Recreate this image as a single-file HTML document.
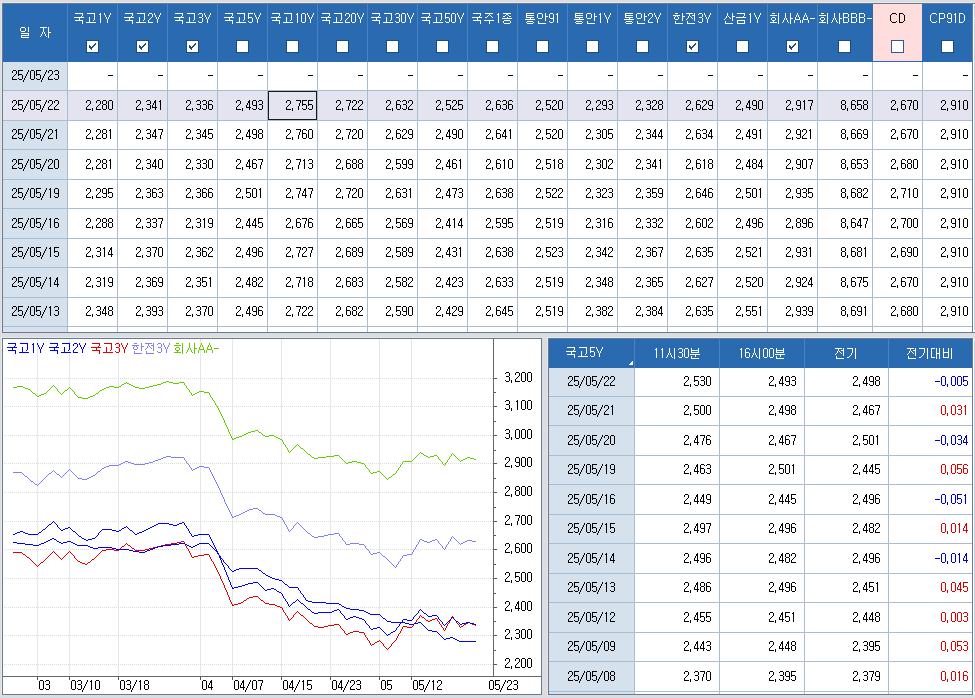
<!DOCTYPE html>
<html><head><meta charset="utf-8"><style>
html,body{margin:0;padding:0;}
body{width:975px;height:698px;overflow:hidden;position:relative;background:#dcdde1;font-family:"Liberation Sans", sans-serif;}
</style></head><body>
<div style="position:absolute;left:1px;top:2px;width:974px;height:331px;background:#e7e8ea;"></div><div style="position:absolute;left:2px;top:3px;width:973px;height:330px;background:#687a90;"></div><div style="position:absolute;left:3px;top:4px;width:969px;height:328px;background:#ffffff;"></div><div style="position:absolute;left:3px;top:4px;width:969px;height:58px;background:#2a6ab0;"></div><div style="position:absolute;left:873px;top:4px;width:49px;height:57px;background:#ffdddd;"></div><div style="position:absolute;left:3px;top:62px;width:64px;height:270px;background:#d5e1ec;"></div><div style="position:absolute;left:3px;top:91px;width:969px;height:29px;background:#e4e4f0;"></div><div style="position:absolute;left:3px;top:90px;width:969px;height:1px;background:#a9bdd0;"></div><div style="position:absolute;left:3px;top:120px;width:969px;height:1px;background:#a9bdd0;"></div><div style="position:absolute;left:3px;top:149px;width:969px;height:1px;background:#a9bdd0;"></div><div style="position:absolute;left:3px;top:179px;width:969px;height:1px;background:#a9bdd0;"></div><div style="position:absolute;left:3px;top:208px;width:969px;height:1px;background:#a9bdd0;"></div><div style="position:absolute;left:3px;top:238px;width:969px;height:1px;background:#a9bdd0;"></div><div style="position:absolute;left:3px;top:267px;width:969px;height:1px;background:#a9bdd0;"></div><div style="position:absolute;left:3px;top:297px;width:969px;height:1px;background:#a9bdd0;"></div><div style="position:absolute;left:3px;top:326px;width:969px;height:1px;background:#a9bdd0;"></div><div style="position:absolute;left:67px;top:62px;width:1px;height:270px;background:#a9bdd0;"></div><div style="position:absolute;left:117px;top:62px;width:1px;height:270px;background:#a9bdd0;"></div><div style="position:absolute;left:167px;top:62px;width:1px;height:270px;background:#a9bdd0;"></div><div style="position:absolute;left:217px;top:62px;width:1px;height:270px;background:#a9bdd0;"></div><div style="position:absolute;left:267px;top:62px;width:1px;height:270px;background:#a9bdd0;"></div><div style="position:absolute;left:317px;top:62px;width:1px;height:270px;background:#a9bdd0;"></div><div style="position:absolute;left:367px;top:62px;width:1px;height:270px;background:#a9bdd0;"></div><div style="position:absolute;left:417px;top:62px;width:1px;height:270px;background:#a9bdd0;"></div><div style="position:absolute;left:467px;top:62px;width:1px;height:270px;background:#a9bdd0;"></div><div style="position:absolute;left:517px;top:62px;width:1px;height:270px;background:#a9bdd0;"></div><div style="position:absolute;left:567px;top:62px;width:1px;height:270px;background:#a9bdd0;"></div><div style="position:absolute;left:617px;top:62px;width:1px;height:270px;background:#a9bdd0;"></div><div style="position:absolute;left:667px;top:62px;width:1px;height:270px;background:#a9bdd0;"></div><div style="position:absolute;left:717px;top:62px;width:1px;height:270px;background:#a9bdd0;"></div><div style="position:absolute;left:767px;top:62px;width:1px;height:270px;background:#a9bdd0;"></div><div style="position:absolute;left:817px;top:62px;width:1px;height:270px;background:#a9bdd0;"></div><div style="position:absolute;left:872px;top:62px;width:1px;height:270px;background:#a9bdd0;"></div><div style="position:absolute;left:922px;top:62px;width:1px;height:270px;background:#a9bdd0;"></div><div style="position:absolute;left:67px;top:4px;width:1px;height:58px;background:#4b82c0;"></div><div style="position:absolute;left:117px;top:4px;width:1px;height:58px;background:#4b82c0;"></div><div style="position:absolute;left:167px;top:4px;width:1px;height:58px;background:#4b82c0;"></div><div style="position:absolute;left:217px;top:4px;width:1px;height:58px;background:#4b82c0;"></div><div style="position:absolute;left:267px;top:4px;width:1px;height:58px;background:#4b82c0;"></div><div style="position:absolute;left:317px;top:4px;width:1px;height:58px;background:#4b82c0;"></div><div style="position:absolute;left:367px;top:4px;width:1px;height:58px;background:#4b82c0;"></div><div style="position:absolute;left:417px;top:4px;width:1px;height:58px;background:#4b82c0;"></div><div style="position:absolute;left:467px;top:4px;width:1px;height:58px;background:#4b82c0;"></div><div style="position:absolute;left:517px;top:4px;width:1px;height:58px;background:#4b82c0;"></div><div style="position:absolute;left:567px;top:4px;width:1px;height:58px;background:#4b82c0;"></div><div style="position:absolute;left:617px;top:4px;width:1px;height:58px;background:#4b82c0;"></div><div style="position:absolute;left:667px;top:4px;width:1px;height:58px;background:#4b82c0;"></div><div style="position:absolute;left:717px;top:4px;width:1px;height:58px;background:#4b82c0;"></div><div style="position:absolute;left:767px;top:4px;width:1px;height:58px;background:#4b82c0;"></div><div style="position:absolute;left:817px;top:4px;width:1px;height:58px;background:#4b82c0;"></div><div style="position:absolute;left:972px;top:3px;width:1px;height:330px;background:#687a90;"></div><div style="position:absolute;left:973px;top:4px;width:2px;height:328px;background:#ffffff;"></div><div style="position:absolute;left:974px;top:5px;width:1px;height:325px;background:#c6d2de;"></div><div style="position:absolute;left:973px;top:18px;width:2px;height:1px;background:#ffffff;"></div><div style="position:absolute;left:86px;top:40px;width:11px;height:11px;background:#fff;border:1px solid #1b4a7f;"></div><svg style="position:absolute;left:87px;top:41px" width="11" height="11" shape-rendering="crispEdges"><path d="M8 2h1v1h-1zM7 3h1v1h-1zM8 3h1v1h-1zM2 4h1v1h-1zM6 4h1v1h-1zM7 4h1v1h-1zM2 5h1v1h-1zM3 5h1v1h-1zM5 5h1v1h-1zM6 5h1v1h-1zM2 6h1v1h-1zM3 6h1v1h-1zM4 6h1v1h-1zM5 6h1v1h-1zM3 7h1v1h-1zM4 7h1v1h-1zM4 8h1v1h-1z" fill="#1b4a7f"/></svg><div style="position:absolute;left:136px;top:40px;width:11px;height:11px;background:#fff;border:1px solid #1b4a7f;"></div><svg style="position:absolute;left:137px;top:41px" width="11" height="11" shape-rendering="crispEdges"><path d="M8 2h1v1h-1zM7 3h1v1h-1zM8 3h1v1h-1zM2 4h1v1h-1zM6 4h1v1h-1zM7 4h1v1h-1zM2 5h1v1h-1zM3 5h1v1h-1zM5 5h1v1h-1zM6 5h1v1h-1zM2 6h1v1h-1zM3 6h1v1h-1zM4 6h1v1h-1zM5 6h1v1h-1zM3 7h1v1h-1zM4 7h1v1h-1zM4 8h1v1h-1z" fill="#1b4a7f"/></svg><div style="position:absolute;left:186px;top:40px;width:11px;height:11px;background:#fff;border:1px solid #1b4a7f;"></div><svg style="position:absolute;left:187px;top:41px" width="11" height="11" shape-rendering="crispEdges"><path d="M8 2h1v1h-1zM7 3h1v1h-1zM8 3h1v1h-1zM2 4h1v1h-1zM6 4h1v1h-1zM7 4h1v1h-1zM2 5h1v1h-1zM3 5h1v1h-1zM5 5h1v1h-1zM6 5h1v1h-1zM2 6h1v1h-1zM3 6h1v1h-1zM4 6h1v1h-1zM5 6h1v1h-1zM3 7h1v1h-1zM4 7h1v1h-1zM4 8h1v1h-1z" fill="#1b4a7f"/></svg><div style="position:absolute;left:236px;top:40px;width:11px;height:11px;background:#fff;border:1px solid #1b4a7f;"></div><div style="position:absolute;left:286px;top:40px;width:11px;height:11px;background:#fff;border:1px solid #1b4a7f;"></div><div style="position:absolute;left:336px;top:40px;width:11px;height:11px;background:#fff;border:1px solid #1b4a7f;"></div><div style="position:absolute;left:386px;top:40px;width:11px;height:11px;background:#fff;border:1px solid #1b4a7f;"></div><div style="position:absolute;left:436px;top:40px;width:11px;height:11px;background:#fff;border:1px solid #1b4a7f;"></div><div style="position:absolute;left:486px;top:40px;width:11px;height:11px;background:#fff;border:1px solid #1b4a7f;"></div><div style="position:absolute;left:536px;top:40px;width:11px;height:11px;background:#fff;border:1px solid #1b4a7f;"></div><div style="position:absolute;left:586px;top:40px;width:11px;height:11px;background:#fff;border:1px solid #1b4a7f;"></div><div style="position:absolute;left:636px;top:40px;width:11px;height:11px;background:#fff;border:1px solid #1b4a7f;"></div><div style="position:absolute;left:686px;top:40px;width:11px;height:11px;background:#fff;border:1px solid #1b4a7f;"></div><svg style="position:absolute;left:687px;top:41px" width="11" height="11" shape-rendering="crispEdges"><path d="M8 2h1v1h-1zM7 3h1v1h-1zM8 3h1v1h-1zM2 4h1v1h-1zM6 4h1v1h-1zM7 4h1v1h-1zM2 5h1v1h-1zM3 5h1v1h-1zM5 5h1v1h-1zM6 5h1v1h-1zM2 6h1v1h-1zM3 6h1v1h-1zM4 6h1v1h-1zM5 6h1v1h-1zM3 7h1v1h-1zM4 7h1v1h-1zM4 8h1v1h-1z" fill="#1b4a7f"/></svg><div style="position:absolute;left:736px;top:40px;width:11px;height:11px;background:#fff;border:1px solid #1b4a7f;"></div><div style="position:absolute;left:786px;top:40px;width:11px;height:11px;background:#fff;border:1px solid #1b4a7f;"></div><svg style="position:absolute;left:787px;top:41px" width="11" height="11" shape-rendering="crispEdges"><path d="M8 2h1v1h-1zM7 3h1v1h-1zM8 3h1v1h-1zM2 4h1v1h-1zM6 4h1v1h-1zM7 4h1v1h-1zM2 5h1v1h-1zM3 5h1v1h-1zM5 5h1v1h-1zM6 5h1v1h-1zM2 6h1v1h-1zM3 6h1v1h-1zM4 6h1v1h-1zM5 6h1v1h-1zM3 7h1v1h-1zM4 7h1v1h-1zM4 8h1v1h-1z" fill="#1b4a7f"/></svg><div style="position:absolute;left:838px;top:40px;width:11px;height:11px;background:#fff;border:1px solid #1b4a7f;"></div><div style="position:absolute;left:891px;top:40px;width:11px;height:11px;background:#fff;border:1px solid #2a5a90;"></div><div style="position:absolute;left:941px;top:40px;width:11px;height:11px;background:#fff;border:1px solid #1b4a7f;"></div><div style="position:absolute;left:108px;top:75px;width:5px;height:1px;background:#000;"></div><div style="position:absolute;left:158px;top:75px;width:5px;height:1px;background:#000;"></div><div style="position:absolute;left:208px;top:75px;width:5px;height:1px;background:#000;"></div><div style="position:absolute;left:258px;top:75px;width:5px;height:1px;background:#000;"></div><div style="position:absolute;left:308px;top:75px;width:5px;height:1px;background:#000;"></div><div style="position:absolute;left:358px;top:75px;width:5px;height:1px;background:#000;"></div><div style="position:absolute;left:408px;top:75px;width:5px;height:1px;background:#000;"></div><div style="position:absolute;left:458px;top:75px;width:5px;height:1px;background:#000;"></div><div style="position:absolute;left:508px;top:75px;width:5px;height:1px;background:#000;"></div><div style="position:absolute;left:558px;top:75px;width:5px;height:1px;background:#000;"></div><div style="position:absolute;left:608px;top:75px;width:5px;height:1px;background:#000;"></div><div style="position:absolute;left:658px;top:75px;width:5px;height:1px;background:#000;"></div><div style="position:absolute;left:708px;top:75px;width:5px;height:1px;background:#000;"></div><div style="position:absolute;left:758px;top:75px;width:5px;height:1px;background:#000;"></div><div style="position:absolute;left:808px;top:75px;width:5px;height:1px;background:#000;"></div><div style="position:absolute;left:863px;top:75px;width:5px;height:1px;background:#000;"></div><div style="position:absolute;left:913px;top:75px;width:5px;height:1px;background:#000;"></div><div style="position:absolute;left:963px;top:75px;width:5px;height:1px;background:#000;"></div><div style="position:absolute;left:268px;top:91px;width:47px;height:27px;border:1px solid #1a1a1a;"></div><div style="position:absolute;left:547px;top:337px;width:428px;height:358px;background:#e7e8ea;"></div><div style="position:absolute;left:548px;top:338px;width:425px;height:357px;background:#687a90;"></div><div style="position:absolute;left:549px;top:339px;width:423px;height:355px;background:#ffffff;"></div><div style="position:absolute;left:549px;top:339px;width:423px;height:29px;background:#2a6ab0;"></div><div style="position:absolute;left:549px;top:368px;width:85px;height:326px;background:#d5e1ec;"></div><div style="position:absolute;left:549px;top:396px;width:423px;height:1px;background:#a9bdd0;"></div><div style="position:absolute;left:549px;top:425px;width:423px;height:1px;background:#a9bdd0;"></div><div style="position:absolute;left:549px;top:455px;width:423px;height:1px;background:#a9bdd0;"></div><div style="position:absolute;left:549px;top:484px;width:423px;height:1px;background:#a9bdd0;"></div><div style="position:absolute;left:549px;top:514px;width:423px;height:1px;background:#a9bdd0;"></div><div style="position:absolute;left:549px;top:543px;width:423px;height:1px;background:#a9bdd0;"></div><div style="position:absolute;left:549px;top:573px;width:423px;height:1px;background:#a9bdd0;"></div><div style="position:absolute;left:549px;top:602px;width:423px;height:1px;background:#a9bdd0;"></div><div style="position:absolute;left:549px;top:632px;width:423px;height:1px;background:#a9bdd0;"></div><div style="position:absolute;left:549px;top:661px;width:423px;height:1px;background:#a9bdd0;"></div><div style="position:absolute;left:549px;top:691px;width:423px;height:1px;background:#a9bdd0;"></div><div style="position:absolute;left:634px;top:368px;width:1px;height:326px;background:#a9bdd0;"></div><div style="position:absolute;left:634px;top:339px;width:1px;height:29px;background:#4b82c0;"></div><div style="position:absolute;left:719px;top:368px;width:1px;height:326px;background:#a9bdd0;"></div><div style="position:absolute;left:719px;top:339px;width:1px;height:29px;background:#4b82c0;"></div><div style="position:absolute;left:804px;top:368px;width:1px;height:326px;background:#a9bdd0;"></div><div style="position:absolute;left:804px;top:339px;width:1px;height:29px;background:#4b82c0;"></div><div style="position:absolute;left:888px;top:368px;width:1px;height:326px;background:#a9bdd0;"></div><div style="position:absolute;left:888px;top:339px;width:1px;height:29px;background:#4b82c0;"></div><div style="position:absolute;left:972px;top:338px;width:1px;height:357px;background:#687a90;"></div><div style="position:absolute;left:973px;top:339px;width:2px;height:355px;background:#ffffff;"></div><div style="position:absolute;left:974px;top:340px;width:1px;height:352px;background:#c6d2de;"></div><div style="position:absolute;left:632px;top:361px;width:1px;height:1px;background:#fff;"></div><div style="position:absolute;left:631px;top:362px;width:2px;height:1px;background:#fff;"></div><div style="position:absolute;left:630px;top:363px;width:3px;height:1px;background:#fff;"></div><div style="position:absolute;left:629px;top:364px;width:4px;height:1px;background:#fff;"></div><div style="position:absolute;left:1px;top:337px;width:541px;height:358px;background:#e7e8ea;"></div><div style="position:absolute;left:2px;top:338px;width:540px;height:357px;background:#687a90;"></div><div style="position:absolute;left:3px;top:339px;width:538px;height:355px;background:#ffffff;"></div><svg style="position:absolute;left:0;top:0" width="975" height="698"><rect x="37" y="339" width="1" height="337" fill="#e6e6e6"/><rect x="37" y="677" width="1" height="3" fill="#555"/><rect x="69" y="339" width="1" height="337" fill="#e6e6e6"/><rect x="69" y="677" width="1" height="3" fill="#555"/><rect x="118" y="339" width="1" height="337" fill="#e6e6e6"/><rect x="118" y="677" width="1" height="3" fill="#555"/><rect x="200" y="339" width="1" height="337" fill="#e6e6e6"/><rect x="200" y="677" width="1" height="3" fill="#555"/><rect x="232" y="339" width="1" height="337" fill="#e6e6e6"/><rect x="232" y="677" width="1" height="3" fill="#555"/><rect x="281" y="339" width="1" height="337" fill="#e6e6e6"/><rect x="281" y="677" width="1" height="3" fill="#555"/><rect x="330" y="339" width="1" height="337" fill="#e6e6e6"/><rect x="330" y="677" width="1" height="3" fill="#555"/><rect x="379" y="339" width="1" height="337" fill="#e6e6e6"/><rect x="379" y="677" width="1" height="3" fill="#555"/><rect x="411" y="339" width="1" height="337" fill="#e6e6e6"/><rect x="411" y="677" width="1" height="3" fill="#555"/><line x1="3" y1="378.5" x2="493" y2="378.5" stroke="#dcdcdc" stroke-width="1" stroke-dasharray="1,1" stroke-dashoffset="1"/><rect x="494" y="378" width="3" height="1" fill="#555"/><rect x="494" y="392" width="2" height="1" fill="#555"/><line x1="3" y1="406.5" x2="493" y2="406.5" stroke="#dcdcdc" stroke-width="1" stroke-dasharray="1,1" stroke-dashoffset="1"/><rect x="494" y="406" width="3" height="1" fill="#555"/><rect x="494" y="421" width="2" height="1" fill="#555"/><line x1="3" y1="435.5" x2="493" y2="435.5" stroke="#dcdcdc" stroke-width="1" stroke-dasharray="1,1" stroke-dashoffset="1"/><rect x="494" y="435" width="3" height="1" fill="#555"/><rect x="494" y="450" width="2" height="1" fill="#555"/><line x1="3" y1="463.5" x2="493" y2="463.5" stroke="#dcdcdc" stroke-width="1" stroke-dasharray="1,1" stroke-dashoffset="1"/><rect x="494" y="463" width="3" height="1" fill="#555"/><rect x="494" y="478" width="2" height="1" fill="#555"/><line x1="3" y1="492.5" x2="493" y2="492.5" stroke="#dcdcdc" stroke-width="1" stroke-dasharray="1,1" stroke-dashoffset="1"/><rect x="494" y="492" width="3" height="1" fill="#555"/><rect x="494" y="507" width="2" height="1" fill="#555"/><line x1="3" y1="521.5" x2="493" y2="521.5" stroke="#dcdcdc" stroke-width="1" stroke-dasharray="1,1" stroke-dashoffset="1"/><rect x="494" y="521" width="3" height="1" fill="#555"/><rect x="494" y="535" width="2" height="1" fill="#555"/><line x1="3" y1="549.5" x2="493" y2="549.5" stroke="#dcdcdc" stroke-width="1" stroke-dasharray="1,1" stroke-dashoffset="1"/><rect x="494" y="549" width="3" height="1" fill="#555"/><rect x="494" y="564" width="2" height="1" fill="#555"/><line x1="3" y1="578.5" x2="493" y2="578.5" stroke="#dcdcdc" stroke-width="1" stroke-dasharray="1,1" stroke-dashoffset="1"/><rect x="494" y="578" width="3" height="1" fill="#555"/><rect x="494" y="593" width="2" height="1" fill="#555"/><line x1="3" y1="607.5" x2="493" y2="607.5" stroke="#dcdcdc" stroke-width="1" stroke-dasharray="1,1" stroke-dashoffset="1"/><rect x="494" y="607" width="3" height="1" fill="#555"/><rect x="494" y="621" width="2" height="1" fill="#555"/><line x1="3" y1="635.5" x2="493" y2="635.5" stroke="#dcdcdc" stroke-width="1" stroke-dasharray="1,1" stroke-dashoffset="1"/><rect x="494" y="635" width="3" height="1" fill="#555"/><rect x="494" y="650" width="2" height="1" fill="#555"/><line x1="3" y1="664.5" x2="493" y2="664.5" stroke="#dcdcdc" stroke-width="1" stroke-dasharray="1,1" stroke-dashoffset="1"/><rect x="494" y="664" width="3" height="1" fill="#555"/><rect x="493" y="339" width="1" height="338" fill="#666"/><rect x="3" y="676" width="538" height="1" fill="#666"/><path d="M166 381h3v1h-3zM126 382h1v1h-1zM163 382h3v1h-3zM169 382h4v1h-4zM179 382h5v1h-5zM124 383h2v1h-2zM127 383h2v1h-2zM161 383h2v1h-2zM173 383h6v1h-6zM184 383h1v1h-1zM122 384h2v1h-2zM129 384h2v1h-2zM157 384h4v1h-4zM184 384h1v1h-1zM53 385h1v1h-1zM121 385h1v1h-1zM131 385h2v1h-2zM153 385h4v1h-4zM185 385h1v1h-1zM17 386h6v1h-6zM52 386h1v1h-1zM54 386h1v1h-1zM109 386h5v1h-5zM119 386h2v1h-2zM133 386h2v1h-2zM149 386h4v1h-4zM186 386h1v1h-1zM13 387h4v1h-4zM23 387h2v1h-2zM51 387h1v1h-1zM55 387h1v1h-1zM69 387h1v1h-1zM106 387h3v1h-3zM114 387h5v1h-5zM135 387h4v1h-4zM145 387h4v1h-4zM186 387h1v1h-1zM25 388h3v1h-3zM50 388h1v1h-1zM56 388h1v1h-1zM68 388h1v1h-1zM70 388h1v1h-1zM104 388h2v1h-2zM139 388h6v1h-6zM187 388h1v1h-1zM28 389h2v1h-2zM49 389h1v1h-1zM57 389h1v1h-1zM67 389h1v1h-1zM71 389h1v1h-1zM102 389h2v1h-2zM188 389h1v1h-1zM30 390h1v1h-1zM48 390h1v1h-1zM57 390h1v1h-1zM65 390h2v1h-2zM72 390h1v1h-1zM100 390h2v1h-2zM189 390h1v1h-1zM31 391h1v1h-1zM47 391h1v1h-1zM58 391h1v1h-1zM64 391h1v1h-1zM73 391h1v1h-1zM99 391h1v1h-1zM189 391h1v1h-1zM199 391h5v1h-5zM32 392h1v1h-1zM46 392h1v1h-1zM59 392h1v1h-1zM63 392h1v1h-1zM74 392h1v1h-1zM98 392h1v1h-1zM190 392h1v1h-1zM197 392h2v1h-2zM204 392h5v1h-5zM33 393h2v1h-2zM44 393h2v1h-2zM60 393h1v1h-1zM62 393h1v1h-1zM74 393h1v1h-1zM96 393h2v1h-2zM191 393h1v1h-1zM195 393h2v1h-2zM209 393h1v1h-1zM35 394h1v1h-1zM41 394h3v1h-3zM61 394h1v1h-1zM75 394h1v1h-1zM95 394h1v1h-1zM191 394h1v1h-1zM193 394h2v1h-2zM209 394h1v1h-1zM36 395h1v1h-1zM39 395h2v1h-2zM76 395h1v1h-1zM93 395h2v1h-2zM192 395h1v1h-1zM210 395h1v1h-1zM37 396h2v1h-2zM77 396h1v1h-1zM90 396h3v1h-3zM210 396h1v1h-1zM78 397h4v1h-4zM88 397h2v1h-2zM211 397h1v1h-1zM82 398h6v1h-6zM212 398h1v1h-1zM212 399h1v1h-1zM213 400h1v1h-1zM214 401h1v1h-1zM214 402h1v1h-1zM215 403h1v1h-1zM215 404h1v1h-1zM216 405h1v1h-1zM217 406h1v1h-1zM217 407h1v1h-1zM218 408h1v1h-1zM218 409h1v1h-1zM219 410h1v1h-1zM219 411h1v1h-1zM220 412h1v1h-1zM220 413h1v1h-1zM221 414h1v1h-1zM221 415h1v1h-1zM222 416h1v1h-1zM222 417h1v1h-1zM223 418h1v1h-1zM223 419h1v1h-1zM224 420h1v1h-1zM224 421h1v1h-1zM224 422h1v1h-1zM225 423h1v1h-1zM225 424h1v1h-1zM226 425h1v1h-1zM226 426h1v1h-1zM227 427h1v1h-1zM227 428h1v1h-1zM228 429h1v1h-1zM228 430h1v1h-1zM255 430h3v1h-3zM228 431h1v1h-1zM251 431h4v1h-4zM258 431h1v1h-1zM229 432h1v1h-1zM248 432h3v1h-3zM259 432h2v1h-2zM229 433h1v1h-1zM246 433h2v1h-2zM261 433h1v1h-1zM230 434h1v1h-1zM244 434h2v1h-2zM262 434h1v1h-1zM230 435h1v1h-1zM242 435h2v1h-2zM263 435h2v1h-2zM269 435h5v1h-5zM231 436h1v1h-1zM239 436h3v1h-3zM265 436h4v1h-4zM274 436h2v1h-2zM231 437h1v1h-1zM236 437h3v1h-3zM276 437h2v1h-2zM232 438h1v1h-1zM234 438h2v1h-2zM278 438h2v1h-2zM232 439h2v1h-2zM280 439h2v1h-2zM282 440h1v1h-1zM282 441h1v1h-1zM283 442h1v1h-1zM283 443h1v1h-1zM284 444h1v1h-1zM297 444h1v1h-1zM285 445h1v1h-1zM296 445h1v1h-1zM298 445h1v1h-1zM285 446h1v1h-1zM295 446h1v1h-1zM299 446h1v1h-1zM286 447h1v1h-1zM294 447h1v1h-1zM300 447h1v1h-1zM287 448h1v1h-1zM293 448h1v1h-1zM301 448h2v1h-2zM287 449h1v1h-1zM292 449h1v1h-1zM303 449h1v1h-1zM288 450h1v1h-1zM291 450h1v1h-1zM304 450h1v1h-1zM288 451h1v1h-1zM290 451h1v1h-1zM305 451h1v1h-1zM289 452h1v1h-1zM306 452h1v1h-1zM420 452h1v1h-1zM307 453h1v1h-1zM419 453h1v1h-1zM421 453h2v1h-2zM452 453h1v1h-1zM308 454h2v1h-2zM418 454h1v1h-1zM423 454h1v1h-1zM451 454h1v1h-1zM453 454h1v1h-1zM310 455h1v1h-1zM334 455h5v1h-5zM417 455h1v1h-1zM424 455h2v1h-2zM434 455h3v1h-3zM451 455h1v1h-1zM454 455h1v1h-1zM311 456h1v1h-1zM326 456h8v1h-8zM339 456h1v1h-1zM416 456h1v1h-1zM426 456h2v1h-2zM430 456h4v1h-4zM437 456h1v1h-1zM450 456h1v1h-1zM455 456h1v1h-1zM312 457h2v1h-2zM318 457h8v1h-8zM340 457h1v1h-1zM415 457h1v1h-1zM428 457h2v1h-2zM438 457h1v1h-1zM449 457h1v1h-1zM456 457h1v1h-1zM467 457h3v1h-3zM314 458h4v1h-4zM341 458h1v1h-1zM414 458h1v1h-1zM438 458h1v1h-1zM449 458h1v1h-1zM457 458h1v1h-1zM465 458h2v1h-2zM470 458h4v1h-4zM342 459h1v1h-1zM413 459h1v1h-1zM439 459h1v1h-1zM448 459h1v1h-1zM458 459h1v1h-1zM463 459h2v1h-2zM474 459h2v1h-2zM343 460h1v1h-1zM412 460h1v1h-1zM440 460h1v1h-1zM447 460h1v1h-1zM459 460h1v1h-1zM461 460h2v1h-2zM344 461h1v1h-1zM352 461h5v1h-5zM403 461h9v1h-9zM441 461h1v1h-1zM447 461h1v1h-1zM460 461h1v1h-1zM345 462h1v1h-1zM348 462h4v1h-4zM357 462h4v1h-4zM402 462h1v1h-1zM442 462h1v1h-1zM446 462h1v1h-1zM346 463h2v1h-2zM361 463h3v1h-3zM402 463h1v1h-1zM442 463h1v1h-1zM445 463h1v1h-1zM364 464h1v1h-1zM401 464h1v1h-1zM443 464h1v1h-1zM445 464h1v1h-1zM365 465h1v1h-1zM400 465h1v1h-1zM444 465h1v1h-1zM365 466h1v1h-1zM400 466h1v1h-1zM366 467h1v1h-1zM399 467h1v1h-1zM367 468h1v1h-1zM398 468h1v1h-1zM368 469h1v1h-1zM398 469h1v1h-1zM369 470h1v1h-1zM397 470h1v1h-1zM369 471h1v1h-1zM377 471h3v1h-3zM396 471h1v1h-1zM370 472h1v1h-1zM373 472h4v1h-4zM380 472h1v1h-1zM396 472h1v1h-1zM371 473h2v1h-2zM381 473h1v1h-1zM395 473h1v1h-1zM382 474h1v1h-1zM393 474h2v1h-2zM383 475h1v1h-1zM392 475h1v1h-1zM384 476h1v1h-1zM391 476h1v1h-1zM385 477h1v1h-1zM389 477h2v1h-2zM386 478h1v1h-1zM388 478h1v1h-1zM387 479h1v1h-1z" fill="#66cc00" shape-rendering="crispEdges"/><path d="M166 456h5v1h-5zM163 457h3v1h-3zM171 457h13v1h-13zM161 458h2v1h-2zM184 458h1v1h-1zM158 459h3v1h-3zM184 459h1v1h-1zM155 460h3v1h-3zM185 460h1v1h-1zM125 461h3v1h-3zM153 461h2v1h-2zM186 461h1v1h-1zM123 462h2v1h-2zM128 462h3v1h-3zM149 462h4v1h-4zM186 462h1v1h-1zM121 463h2v1h-2zM131 463h3v1h-3zM145 463h4v1h-4zM187 463h1v1h-1zM119 464h2v1h-2zM134 464h11v1h-11zM188 464h1v1h-1zM109 465h10v1h-10zM189 465h1v1h-1zM106 466h3v1h-3zM189 466h1v1h-1zM199 466h5v1h-5zM104 467h2v1h-2zM190 467h1v1h-1zM197 467h2v1h-2zM204 467h5v1h-5zM102 468h2v1h-2zM191 468h1v1h-1zM195 468h2v1h-2zM209 468h1v1h-1zM69 469h1v1h-1zM101 469h1v1h-1zM191 469h1v1h-1zM193 469h2v1h-2zM209 469h1v1h-1zM53 470h1v1h-1zM68 470h1v1h-1zM70 470h1v1h-1zM100 470h1v1h-1zM192 470h1v1h-1zM210 470h1v1h-1zM52 471h1v1h-1zM54 471h1v1h-1zM67 471h1v1h-1zM71 471h1v1h-1zM98 471h2v1h-2zM210 471h1v1h-1zM13 472h9v1h-9zM51 472h1v1h-1zM55 472h1v1h-1zM66 472h1v1h-1zM72 472h1v1h-1zM97 472h1v1h-1zM211 472h1v1h-1zM22 473h1v1h-1zM49 473h2v1h-2zM56 473h1v1h-1zM65 473h1v1h-1zM73 473h1v1h-1zM96 473h1v1h-1zM211 473h1v1h-1zM23 474h1v1h-1zM48 474h1v1h-1zM57 474h2v1h-2zM64 474h1v1h-1zM74 474h1v1h-1zM95 474h1v1h-1zM212 474h1v1h-1zM24 475h1v1h-1zM47 475h1v1h-1zM59 475h1v1h-1zM63 475h1v1h-1zM75 475h1v1h-1zM93 475h2v1h-2zM212 475h1v1h-1zM25 476h2v1h-2zM46 476h1v1h-1zM60 476h1v1h-1zM62 476h1v1h-1zM76 476h1v1h-1zM91 476h2v1h-2zM213 476h1v1h-1zM27 477h1v1h-1zM45 477h1v1h-1zM61 477h1v1h-1zM77 477h1v1h-1zM89 477h2v1h-2zM213 477h1v1h-1zM28 478h1v1h-1zM44 478h1v1h-1zM78 478h4v1h-4zM87 478h2v1h-2zM214 478h1v1h-1zM29 479h1v1h-1zM43 479h1v1h-1zM82 479h5v1h-5zM214 479h1v1h-1zM30 480h1v1h-1zM42 480h1v1h-1zM215 480h1v1h-1zM31 481h2v1h-2zM41 481h1v1h-1zM215 481h1v1h-1zM33 482h1v1h-1zM40 482h1v1h-1zM216 482h1v1h-1zM34 483h1v1h-1zM39 483h1v1h-1zM216 483h1v1h-1zM35 484h2v1h-2zM38 484h1v1h-1zM217 484h1v1h-1zM37 485h1v1h-1zM217 485h1v1h-1zM218 486h1v1h-1zM218 487h1v1h-1zM219 488h1v1h-1zM219 489h1v1h-1zM220 490h1v1h-1zM220 491h1v1h-1zM220 492h1v1h-1zM221 493h1v1h-1zM221 494h1v1h-1zM222 495h1v1h-1zM222 496h1v1h-1zM223 497h1v1h-1zM223 498h1v1h-1zM224 499h1v1h-1zM224 500h1v1h-1zM224 501h1v1h-1zM225 502h1v1h-1zM225 503h1v1h-1zM226 504h1v1h-1zM226 505h1v1h-1zM227 506h1v1h-1zM227 507h1v1h-1zM228 508h1v1h-1zM253 508h5v1h-5zM228 509h1v1h-1zM249 509h4v1h-4zM258 509h1v1h-1zM229 510h1v1h-1zM247 510h2v1h-2zM259 510h2v1h-2zM229 511h1v1h-1zM245 511h2v1h-2zM261 511h1v1h-1zM230 512h1v1h-1zM243 512h2v1h-2zM262 512h1v1h-1zM230 513h1v1h-1zM241 513h2v1h-2zM263 513h2v1h-2zM231 514h1v1h-1zM239 514h2v1h-2zM265 514h10v1h-10zM231 515h1v1h-1zM236 515h3v1h-3zM275 515h2v1h-2zM232 516h1v1h-1zM234 516h2v1h-2zM277 516h3v1h-3zM232 517h2v1h-2zM280 517h2v1h-2zM282 518h1v1h-1zM282 519h1v1h-1zM283 520h1v1h-1zM283 521h1v1h-1zM284 522h1v1h-1zM297 522h1v1h-1zM284 523h1v1h-1zM296 523h1v1h-1zM298 523h1v1h-1zM285 524h1v1h-1zM295 524h1v1h-1zM299 524h1v1h-1zM286 525h1v1h-1zM294 525h1v1h-1zM300 525h1v1h-1zM286 526h1v1h-1zM293 526h1v1h-1zM301 526h1v1h-1zM287 527h1v1h-1zM293 527h1v1h-1zM302 527h1v1h-1zM287 528h1v1h-1zM292 528h1v1h-1zM303 528h1v1h-1zM288 529h1v1h-1zM291 529h1v1h-1zM304 529h1v1h-1zM288 530h1v1h-1zM290 530h1v1h-1zM305 530h1v1h-1zM289 531h1v1h-1zM306 531h1v1h-1zM307 532h1v1h-1zM308 533h2v1h-2zM334 533h5v1h-5zM310 534h1v1h-1zM328 534h6v1h-6zM339 534h1v1h-1zM311 535h1v1h-1zM324 535h4v1h-4zM339 535h1v1h-1zM312 536h2v1h-2zM318 536h6v1h-6zM340 536h1v1h-1zM452 536h1v1h-1zM314 537h4v1h-4zM341 537h1v1h-1zM451 537h1v1h-1zM453 537h1v1h-1zM342 538h1v1h-1zM451 538h1v1h-1zM454 538h1v1h-1zM342 539h1v1h-1zM420 539h2v1h-2zM435 539h2v1h-2zM450 539h1v1h-1zM455 539h1v1h-1zM343 540h1v1h-1zM419 540h1v1h-1zM422 540h2v1h-2zM432 540h3v1h-3zM437 540h1v1h-1zM450 540h1v1h-1zM456 540h1v1h-1zM467 540h5v1h-5zM344 541h1v1h-1zM419 541h1v1h-1zM424 541h3v1h-3zM430 541h2v1h-2zM438 541h1v1h-1zM449 541h1v1h-1zM457 541h1v1h-1zM465 541h2v1h-2zM472 541h4v1h-4zM345 542h1v1h-1zM418 542h1v1h-1zM427 542h3v1h-3zM438 542h1v1h-1zM448 542h1v1h-1zM458 542h1v1h-1zM463 542h2v1h-2zM345 543h1v1h-1zM350 543h9v1h-9zM418 543h1v1h-1zM439 543h1v1h-1zM448 543h1v1h-1zM459 543h1v1h-1zM461 543h2v1h-2zM346 544h4v1h-4zM359 544h5v1h-5zM417 544h1v1h-1zM440 544h1v1h-1zM447 544h1v1h-1zM460 544h1v1h-1zM364 545h1v1h-1zM416 545h1v1h-1zM441 545h1v1h-1zM446 545h1v1h-1zM365 546h1v1h-1zM416 546h1v1h-1zM442 546h1v1h-1zM446 546h1v1h-1zM365 547h1v1h-1zM415 547h1v1h-1zM442 547h1v1h-1zM445 547h1v1h-1zM366 548h1v1h-1zM415 548h1v1h-1zM443 548h1v1h-1zM445 548h1v1h-1zM367 549h1v1h-1zM414 549h1v1h-1zM444 549h1v1h-1zM368 550h1v1h-1zM413 550h1v1h-1zM369 551h1v1h-1zM413 551h1v1h-1zM369 552h1v1h-1zM377 552h3v1h-3zM412 552h1v1h-1zM370 553h1v1h-1zM373 553h4v1h-4zM380 553h1v1h-1zM412 553h1v1h-1zM371 554h2v1h-2zM381 554h1v1h-1zM407 554h5v1h-5zM382 555h1v1h-1zM403 555h4v1h-4zM383 556h2v1h-2zM402 556h1v1h-1zM385 557h1v1h-1zM402 557h1v1h-1zM386 558h1v1h-1zM401 558h1v1h-1zM387 559h1v1h-1zM400 559h1v1h-1zM388 560h1v1h-1zM400 560h1v1h-1zM389 561h1v1h-1zM399 561h1v1h-1zM390 562h1v1h-1zM398 562h1v1h-1zM391 563h1v1h-1zM398 563h1v1h-1zM392 564h1v1h-1zM397 564h1v1h-1zM393 565h1v1h-1zM396 565h1v1h-1zM394 566h1v1h-1zM396 566h1v1h-1zM395 567h1v1h-1z" fill="#8080ff" shape-rendering="crispEdges"/><path d="M181 541h3v1h-3zM177 542h4v1h-4zM184 542h1v1h-1zM126 543h1v1h-1zM171 543h6v1h-6zM184 543h1v1h-1zM125 544h1v1h-1zM127 544h1v1h-1zM165 544h6v1h-6zM185 544h1v1h-1zM124 545h1v1h-1zM128 545h2v1h-2zM161 545h4v1h-4zM185 545h1v1h-1zM122 546h2v1h-2zM130 546h1v1h-1zM157 546h4v1h-4zM186 546h1v1h-1zM121 547h1v1h-1zM131 547h1v1h-1zM153 547h4v1h-4zM186 547h1v1h-1zM120 548h1v1h-1zM132 548h2v1h-2zM149 548h4v1h-4zM187 548h1v1h-1zM106 549h8v1h-8zM119 549h1v1h-1zM134 549h1v1h-1zM145 549h4v1h-4zM188 549h1v1h-1zM102 550h4v1h-4zM114 550h5v1h-5zM135 550h10v1h-10zM188 550h1v1h-1zM53 551h1v1h-1zM69 551h1v1h-1zM101 551h1v1h-1zM189 551h1v1h-1zM13 552h9v1h-9zM52 552h1v1h-1zM54 552h1v1h-1zM68 552h1v1h-1zM70 552h1v1h-1zM100 552h1v1h-1zM189 552h1v1h-1zM22 553h1v1h-1zM51 553h1v1h-1zM55 553h1v1h-1zM67 553h1v1h-1zM71 553h1v1h-1zM99 553h1v1h-1zM190 553h1v1h-1zM23 554h2v1h-2zM50 554h1v1h-1zM56 554h1v1h-1zM66 554h1v1h-1zM72 554h1v1h-1zM98 554h1v1h-1zM190 554h1v1h-1zM204 554h5v1h-5zM25 555h1v1h-1zM49 555h1v1h-1zM57 555h1v1h-1zM65 555h1v1h-1zM73 555h1v1h-1zM97 555h1v1h-1zM191 555h1v1h-1zM198 555h6v1h-6zM209 555h1v1h-1zM26 556h1v1h-1zM48 556h1v1h-1zM58 556h1v1h-1zM64 556h1v1h-1zM74 556h1v1h-1zM96 556h1v1h-1zM191 556h1v1h-1zM194 556h4v1h-4zM209 556h1v1h-1zM27 557h2v1h-2zM47 557h1v1h-1zM59 557h1v1h-1zM63 557h1v1h-1zM74 557h1v1h-1zM95 557h1v1h-1zM192 557h2v1h-2zM210 557h1v1h-1zM29 558h1v1h-1zM46 558h1v1h-1zM60 558h1v1h-1zM62 558h1v1h-1zM75 558h1v1h-1zM94 558h1v1h-1zM210 558h1v1h-1zM30 559h1v1h-1zM45 559h1v1h-1zM61 559h1v1h-1zM76 559h1v1h-1zM92 559h2v1h-2zM211 559h1v1h-1zM31 560h1v1h-1zM44 560h1v1h-1zM77 560h1v1h-1zM91 560h1v1h-1zM211 560h1v1h-1zM32 561h1v1h-1zM43 561h1v1h-1zM78 561h2v1h-2zM90 561h1v1h-1zM212 561h1v1h-1zM33 562h1v1h-1zM41 562h2v1h-2zM80 562h2v1h-2zM88 562h2v1h-2zM213 562h1v1h-1zM34 563h1v1h-1zM40 563h1v1h-1zM82 563h3v1h-3zM87 563h1v1h-1zM213 563h1v1h-1zM35 564h1v1h-1zM39 564h1v1h-1zM85 564h2v1h-2zM214 564h1v1h-1zM36 565h1v1h-1zM38 565h1v1h-1zM214 565h1v1h-1zM37 566h1v1h-1zM215 566h1v1h-1zM215 567h1v1h-1zM216 568h1v1h-1zM216 569h1v1h-1zM217 570h1v1h-1zM217 571h1v1h-1zM218 572h1v1h-1zM218 573h1v1h-1zM219 574h1v1h-1zM219 575h1v1h-1zM220 576h1v1h-1zM220 577h1v1h-1zM220 578h1v1h-1zM221 579h1v1h-1zM221 580h1v1h-1zM222 581h1v1h-1zM222 582h1v1h-1zM223 583h1v1h-1zM223 584h1v1h-1zM224 585h1v1h-1zM224 586h1v1h-1zM224 587h1v1h-1zM225 588h1v1h-1zM225 589h1v1h-1zM226 590h1v1h-1zM226 591h1v1h-1zM227 592h1v1h-1zM227 593h1v1h-1zM227 594h1v1h-1zM228 595h1v1h-1zM228 596h1v1h-1zM253 596h5v1h-5zM229 597h1v1h-1zM249 597h4v1h-4zM258 597h1v1h-1zM229 598h1v1h-1zM247 598h2v1h-2zM259 598h1v1h-1zM229 599h1v1h-1zM246 599h1v1h-1zM260 599h1v1h-1zM230 600h1v1h-1zM244 600h2v1h-2zM261 600h2v1h-2zM230 601h1v1h-1zM243 601h1v1h-1zM263 601h1v1h-1zM231 602h1v1h-1zM241 602h2v1h-2zM264 602h1v1h-1zM231 603h1v1h-1zM238 603h3v1h-3zM265 603h4v1h-4zM232 604h1v1h-1zM234 604h4v1h-4zM269 604h6v1h-6zM232 605h2v1h-2zM275 605h2v1h-2zM277 606h3v1h-3zM280 607h2v1h-2zM282 608h1v1h-1zM282 609h1v1h-1zM283 610h1v1h-1zM283 611h1v1h-1zM297 611h1v1h-1zM284 612h1v1h-1zM296 612h1v1h-1zM298 612h1v1h-1zM285 613h1v1h-1zM295 613h1v1h-1zM299 613h1v1h-1zM285 614h1v1h-1zM294 614h1v1h-1zM300 614h1v1h-1zM286 615h1v1h-1zM293 615h1v1h-1zM301 615h2v1h-2zM420 615h1v1h-1zM287 616h1v1h-1zM293 616h1v1h-1zM303 616h1v1h-1zM419 616h1v1h-1zM421 616h1v1h-1zM452 616h1v1h-1zM287 617h1v1h-1zM292 617h1v1h-1zM304 617h1v1h-1zM419 617h1v1h-1zM422 617h2v1h-2zM451 617h1v1h-1zM453 617h1v1h-1zM288 618h1v1h-1zM291 618h1v1h-1zM305 618h1v1h-1zM418 618h1v1h-1zM424 618h1v1h-1zM435 618h2v1h-2zM451 618h1v1h-1zM453 618h1v1h-1zM288 619h1v1h-1zM290 619h1v1h-1zM306 619h1v1h-1zM417 619h1v1h-1zM425 619h1v1h-1zM432 619h3v1h-3zM437 619h1v1h-1zM450 619h1v1h-1zM454 619h1v1h-1zM289 620h1v1h-1zM307 620h1v1h-1zM416 620h1v1h-1zM426 620h2v1h-2zM430 620h2v1h-2zM437 620h1v1h-1zM450 620h1v1h-1zM455 620h1v1h-1zM308 621h1v1h-1zM416 621h1v1h-1zM428 621h2v1h-2zM438 621h1v1h-1zM449 621h1v1h-1zM456 621h1v1h-1zM309 622h1v1h-1zM415 622h1v1h-1zM439 622h1v1h-1zM449 622h1v1h-1zM456 622h1v1h-1zM468 622h2v1h-2zM310 623h2v1h-2zM414 623h1v1h-1zM439 623h1v1h-1zM448 623h1v1h-1zM457 623h1v1h-1zM466 623h2v1h-2zM470 623h2v1h-2zM312 624h1v1h-1zM334 624h5v1h-5zM413 624h1v1h-1zM440 624h1v1h-1zM447 624h1v1h-1zM458 624h1v1h-1zM464 624h2v1h-2zM472 624h3v1h-3zM313 625h1v1h-1zM328 625h6v1h-6zM339 625h1v1h-1zM413 625h1v1h-1zM441 625h1v1h-1zM447 625h1v1h-1zM459 625h1v1h-1zM463 625h1v1h-1zM475 625h1v1h-1zM314 626h4v1h-4zM324 626h4v1h-4zM340 626h1v1h-1zM403 626h4v1h-4zM412 626h1v1h-1zM441 626h1v1h-1zM446 626h1v1h-1zM459 626h1v1h-1zM461 626h2v1h-2zM318 627h6v1h-6zM340 627h1v1h-1zM402 627h1v1h-1zM407 627h5v1h-5zM442 627h1v1h-1zM446 627h1v1h-1zM460 627h1v1h-1zM341 628h1v1h-1zM402 628h1v1h-1zM443 628h1v1h-1zM445 628h1v1h-1zM342 629h1v1h-1zM401 629h1v1h-1zM443 629h1v1h-1zM445 629h1v1h-1zM343 630h1v1h-1zM401 630h1v1h-1zM444 630h1v1h-1zM344 631h1v1h-1zM353 631h6v1h-6zM400 631h1v1h-1zM344 632h1v1h-1zM350 632h3v1h-3zM359 632h5v1h-5zM400 632h1v1h-1zM345 633h1v1h-1zM348 633h2v1h-2zM364 633h1v1h-1zM399 633h1v1h-1zM346 634h2v1h-2zM364 634h1v1h-1zM398 634h1v1h-1zM365 635h1v1h-1zM398 635h1v1h-1zM365 636h1v1h-1zM397 636h1v1h-1zM366 637h1v1h-1zM397 637h1v1h-1zM367 638h1v1h-1zM396 638h1v1h-1zM367 639h1v1h-1zM396 639h1v1h-1zM368 640h1v1h-1zM379 640h1v1h-1zM395 640h1v1h-1zM369 641h1v1h-1zM377 641h2v1h-2zM380 641h1v1h-1zM394 641h1v1h-1zM369 642h1v1h-1zM375 642h2v1h-2zM381 642h1v1h-1zM393 642h1v1h-1zM370 643h1v1h-1zM374 643h1v1h-1zM382 643h1v1h-1zM392 643h1v1h-1zM370 644h1v1h-1zM372 644h2v1h-2zM383 644h1v1h-1zM391 644h1v1h-1zM371 645h1v1h-1zM383 645h1v1h-1zM391 645h1v1h-1zM384 646h1v1h-1zM390 646h1v1h-1zM385 647h1v1h-1zM389 647h1v1h-1zM386 648h1v1h-1zM388 648h1v1h-1zM387 649h1v1h-1z" fill="#e00000" shape-rendering="crispEdges"/><path d="M53 521h1v1h-1zM52 522h1v1h-1zM54 522h1v1h-1zM182 522h2v1h-2zM51 523h1v1h-1zM55 523h1v1h-1zM158 523h11v1h-11zM179 523h3v1h-3zM184 523h1v1h-1zM49 524h2v1h-2zM56 524h1v1h-1zM156 524h2v1h-2zM169 524h4v1h-4zM177 524h2v1h-2zM184 524h1v1h-1zM48 525h1v1h-1zM57 525h1v1h-1zM154 525h2v1h-2zM173 525h4v1h-4zM185 525h1v1h-1zM47 526h1v1h-1zM57 526h1v1h-1zM126 526h1v1h-1zM152 526h2v1h-2zM186 526h1v1h-1zM46 527h1v1h-1zM58 527h1v1h-1zM68 527h2v1h-2zM124 527h2v1h-2zM127 527h1v1h-1zM150 527h2v1h-2zM186 527h1v1h-1zM45 528h1v1h-1zM59 528h1v1h-1zM65 528h3v1h-3zM70 528h1v1h-1zM122 528h2v1h-2zM128 528h1v1h-1zM148 528h2v1h-2zM187 528h1v1h-1zM43 529h2v1h-2zM60 529h1v1h-1zM63 529h2v1h-2zM71 529h1v1h-1zM102 529h10v1h-10zM121 529h1v1h-1zM129 529h1v1h-1zM146 529h2v1h-2zM188 529h1v1h-1zM42 530h1v1h-1zM61 530h2v1h-2zM72 530h1v1h-1zM101 530h1v1h-1zM112 530h4v1h-4zM119 530h2v1h-2zM130 530h2v1h-2zM144 530h2v1h-2zM188 530h1v1h-1zM20 531h3v1h-3zM41 531h1v1h-1zM73 531h2v1h-2zM100 531h1v1h-1zM116 531h3v1h-3zM132 531h1v1h-1zM142 531h2v1h-2zM189 531h1v1h-1zM17 532h3v1h-3zM23 532h2v1h-2zM39 532h2v1h-2zM75 532h1v1h-1zM99 532h1v1h-1zM133 532h1v1h-1zM139 532h3v1h-3zM189 532h1v1h-1zM15 533h2v1h-2zM25 533h3v1h-3zM38 533h1v1h-1zM76 533h1v1h-1zM98 533h1v1h-1zM134 533h1v1h-1zM137 533h2v1h-2zM190 533h1v1h-1zM13 534h2v1h-2zM28 534h10v1h-10zM77 534h1v1h-1zM98 534h1v1h-1zM135 534h2v1h-2zM191 534h1v1h-1zM198 534h11v1h-11zM78 535h1v1h-1zM97 535h1v1h-1zM191 535h1v1h-1zM194 535h4v1h-4zM209 535h1v1h-1zM79 536h2v1h-2zM96 536h1v1h-1zM192 536h2v1h-2zM209 536h1v1h-1zM81 537h1v1h-1zM95 537h1v1h-1zM210 537h1v1h-1zM82 538h2v1h-2zM92 538h3v1h-3zM210 538h1v1h-1zM84 539h2v1h-2zM88 539h4v1h-4zM211 539h1v1h-1zM86 540h2v1h-2zM211 540h1v1h-1zM212 541h1v1h-1zM212 542h1v1h-1zM213 543h1v1h-1zM213 544h1v1h-1zM214 545h1v1h-1zM214 546h1v1h-1zM215 547h1v1h-1zM215 548h1v1h-1zM216 549h1v1h-1zM216 550h1v1h-1zM217 551h1v1h-1zM217 552h1v1h-1zM218 553h1v1h-1zM218 554h1v1h-1zM219 555h1v1h-1zM219 556h1v1h-1zM219 557h1v1h-1zM220 558h1v1h-1zM220 559h1v1h-1zM221 560h1v1h-1zM221 561h1v1h-1zM221 562h1v1h-1zM222 563h1v1h-1zM222 564h1v1h-1zM223 565h1v1h-1zM223 566h1v1h-1zM224 567h1v1h-1zM224 568h1v1h-1zM224 569h1v1h-1zM225 570h1v1h-1zM225 571h1v1h-1zM226 572h1v1h-1zM226 573h1v1h-1zM226 574h1v1h-1zM227 575h1v1h-1zM227 576h1v1h-1zM228 577h1v1h-1zM228 578h1v1h-1zM228 579h1v1h-1zM229 580h1v1h-1zM229 581h1v1h-1zM230 582h1v1h-1zM253 582h5v1h-5zM230 583h1v1h-1zM248 583h5v1h-5zM258 583h1v1h-1zM230 584h1v1h-1zM245 584h3v1h-3zM259 584h1v1h-1zM231 585h1v1h-1zM242 585h3v1h-3zM260 585h1v1h-1zM231 586h1v1h-1zM238 586h4v1h-4zM261 586h1v1h-1zM232 587h1v1h-1zM234 587h4v1h-4zM262 587h1v1h-1zM232 588h2v1h-2zM263 588h1v1h-1zM271 588h3v1h-3zM264 589h1v1h-1zM267 589h4v1h-4zM274 589h2v1h-2zM265 590h2v1h-2zM276 590h1v1h-1zM277 591h2v1h-2zM279 592h2v1h-2zM281 593h1v1h-1zM282 594h1v1h-1zM282 595h1v1h-1zM283 596h1v1h-1zM283 597h1v1h-1zM284 598h1v1h-1zM285 599h1v1h-1zM297 599h1v1h-1zM285 600h1v1h-1zM296 600h1v1h-1zM298 600h1v1h-1zM286 601h1v1h-1zM295 601h1v1h-1zM299 601h1v1h-1zM287 602h1v1h-1zM293 602h2v1h-2zM300 602h1v1h-1zM287 603h1v1h-1zM292 603h1v1h-1zM301 603h2v1h-2zM288 604h1v1h-1zM291 604h1v1h-1zM303 604h1v1h-1zM288 605h1v1h-1zM290 605h1v1h-1zM304 605h1v1h-1zM289 606h1v1h-1zM305 606h1v1h-1zM306 607h1v1h-1zM307 608h1v1h-1zM308 609h2v1h-2zM337 609h2v1h-2zM420 609h1v1h-1zM310 610h1v1h-1zM334 610h3v1h-3zM339 610h1v1h-1zM419 610h1v1h-1zM421 610h1v1h-1zM311 611h1v1h-1zM332 611h2v1h-2zM340 611h1v1h-1zM418 611h1v1h-1zM422 611h1v1h-1zM312 612h2v1h-2zM318 612h14v1h-14zM340 612h1v1h-1zM418 612h1v1h-1zM423 612h1v1h-1zM314 613h4v1h-4zM341 613h1v1h-1zM417 613h1v1h-1zM424 613h2v1h-2zM342 614h1v1h-1zM416 614h1v1h-1zM426 614h1v1h-1zM343 615h1v1h-1zM415 615h1v1h-1zM427 615h1v1h-1zM432 615h5v1h-5zM344 616h1v1h-1zM353 616h3v1h-3zM414 616h1v1h-1zM428 616h4v1h-4zM437 616h1v1h-1zM344 617h1v1h-1zM350 617h3v1h-3zM356 617h3v1h-3zM413 617h1v1h-1zM438 617h1v1h-1zM452 617h1v1h-1zM345 618h1v1h-1zM348 618h2v1h-2zM359 618h3v1h-3zM413 618h1v1h-1zM438 618h1v1h-1zM451 618h1v1h-1zM453 618h1v1h-1zM346 619h2v1h-2zM362 619h2v1h-2zM403 619h4v1h-4zM412 619h1v1h-1zM439 619h1v1h-1zM450 619h1v1h-1zM454 619h1v1h-1zM364 620h1v1h-1zM402 620h1v1h-1zM407 620h5v1h-5zM440 620h1v1h-1zM449 620h1v1h-1zM455 620h1v1h-1zM365 621h1v1h-1zM402 621h1v1h-1zM441 621h1v1h-1zM448 621h1v1h-1zM456 621h2v1h-2zM365 622h1v1h-1zM401 622h1v1h-1zM442 622h1v1h-1zM447 622h1v1h-1zM458 622h1v1h-1zM466 622h4v1h-4zM366 623h1v1h-1zM400 623h1v1h-1zM442 623h1v1h-1zM446 623h1v1h-1zM459 623h1v1h-1zM462 623h4v1h-4zM470 623h4v1h-4zM367 624h1v1h-1zM399 624h1v1h-1zM443 624h1v1h-1zM445 624h1v1h-1zM460 624h2v1h-2zM474 624h2v1h-2zM368 625h1v1h-1zM399 625h1v1h-1zM444 625h1v1h-1zM369 626h1v1h-1zM398 626h1v1h-1zM369 627h1v1h-1zM377 627h3v1h-3zM397 627h1v1h-1zM370 628h1v1h-1zM373 628h4v1h-4zM380 628h1v1h-1zM396 628h1v1h-1zM371 629h2v1h-2zM381 629h1v1h-1zM396 629h1v1h-1zM382 630h1v1h-1zM395 630h1v1h-1zM383 631h1v1h-1zM393 631h2v1h-2zM384 632h1v1h-1zM391 632h2v1h-2zM385 633h1v1h-1zM390 633h1v1h-1zM386 634h1v1h-1zM388 634h2v1h-2zM387 635h1v1h-1z" fill="#0000ff" shape-rendering="crispEdges"/><path d="M52 538h2v1h-2zM50 539h2v1h-2zM54 539h2v1h-2zM48 540h2v1h-2zM56 540h1v1h-1zM46 541h2v1h-2zM57 541h2v1h-2zM67 541h4v1h-4zM13 542h4v1h-4zM44 542h2v1h-2zM59 542h2v1h-2zM63 542h4v1h-4zM71 542h2v1h-2zM17 543h8v1h-8zM41 543h3v1h-3zM61 543h2v1h-2zM73 543h2v1h-2zM179 543h6v1h-6zM199 543h10v1h-10zM25 544h8v1h-8zM39 544h2v1h-2zM75 544h2v1h-2zM171 544h8v1h-8zM185 544h2v1h-2zM197 544h2v1h-2zM209 544h1v1h-1zM33 545h6v1h-6zM77 545h11v1h-11zM163 545h8v1h-8zM187 545h2v1h-2zM195 545h2v1h-2zM210 545h1v1h-1zM88 546h2v1h-2zM158 546h5v1h-5zM189 546h2v1h-2zM193 546h2v1h-2zM211 546h1v1h-1zM90 547h3v1h-3zM98 547h14v1h-14zM155 547h3v1h-3zM191 547h2v1h-2zM212 547h1v1h-1zM93 548h5v1h-5zM112 548h4v1h-4zM153 548h2v1h-2zM213 548h1v1h-1zM116 549h13v1h-13zM150 549h3v1h-3zM214 549h1v1h-1zM129 550h4v1h-4zM147 550h3v1h-3zM215 550h1v1h-1zM133 551h6v1h-6zM145 551h2v1h-2zM216 551h1v1h-1zM139 552h6v1h-6zM217 552h1v1h-1zM217 553h1v1h-1zM218 554h1v1h-1zM219 555h1v1h-1zM220 556h1v1h-1zM220 557h1v1h-1zM221 558h1v1h-1zM222 559h1v1h-1zM223 560h1v1h-1zM223 561h1v1h-1zM224 562h1v1h-1zM225 563h1v1h-1zM226 564h1v1h-1zM227 565h1v1h-1zM228 566h1v1h-1zM228 567h1v1h-1zM229 568h1v1h-1zM239 568h19v1h-19zM230 569h1v1h-1zM236 569h3v1h-3zM258 569h1v1h-1zM231 570h1v1h-1zM234 570h2v1h-2zM259 570h2v1h-2zM232 571h2v1h-2zM261 571h1v1h-1zM262 572h1v1h-1zM263 573h2v1h-2zM265 574h1v1h-1zM266 575h2v1h-2zM268 576h2v1h-2zM270 577h2v1h-2zM272 578h3v1h-3zM275 579h4v1h-4zM279 580h3v1h-3zM282 581h1v1h-1zM283 582h1v1h-1zM284 583h1v1h-1zM285 584h2v1h-2zM287 585h1v1h-1zM288 586h1v1h-1zM289 587h9v1h-9zM298 588h1v1h-1zM298 589h1v1h-1zM299 590h1v1h-1zM300 591h1v1h-1zM300 592h1v1h-1zM301 593h1v1h-1zM302 594h1v1h-1zM303 595h1v1h-1zM303 596h1v1h-1zM304 597h1v1h-1zM305 598h1v1h-1zM305 599h1v1h-1zM306 600h2v1h-2zM308 601h4v1h-4zM312 602h14v1h-14zM326 603h13v1h-13zM339 604h2v1h-2zM341 605h1v1h-1zM342 606h2v1h-2zM344 607h2v1h-2zM346 608h4v1h-4zM350 609h9v1h-9zM359 610h5v1h-5zM364 611h2v1h-2zM366 612h2v1h-2zM368 613h2v1h-2zM370 614h10v1h-10zM380 615h1v1h-1zM381 616h1v1h-1zM382 617h1v1h-1zM383 618h2v1h-2zM385 619h1v1h-1zM386 620h1v1h-1zM387 621h4v1h-4zM391 622h14v1h-14zM418 622h3v1h-3zM405 623h4v1h-4zM414 623h4v1h-4zM421 623h1v1h-1zM409 624h5v1h-5zM422 624h1v1h-1zM423 625h1v1h-1zM424 626h1v1h-1zM425 627h1v1h-1zM426 628h1v1h-1zM427 629h1v1h-1zM428 630h4v1h-4zM432 631h5v1h-5zM437 632h1v1h-1zM438 633h1v1h-1zM439 634h1v1h-1zM440 635h1v1h-1zM441 636h1v1h-1zM442 637h1v1h-1zM450 637h3v1h-3zM443 638h1v1h-1zM446 638h4v1h-4zM453 638h2v1h-2zM444 639h2v1h-2zM455 639h2v1h-2zM457 640h2v1h-2zM459 641h17v1h-17z" fill="#0000ff" shape-rendering="crispEdges"/></svg><svg style="position:absolute;left:0;top:0" width="0" height="0"><defs><path id="p0" d="M1 0h3v1h-3zM0 1h1v8h-1zM4 1h1v8h-1zM1 9h3v1h-3z"/><path id="p1" d="M2 0h1v1h-1zM1 1h2v1h-2zM2 2h1v8h-1z"/><path id="p2" d="M1 0h3v1h-3zM0 1h1v2h-1zM4 1h1v3h-1zM3 4h1v1h-1zM2 5h1v1h-1zM1 6h1v1h-1zM0 7h1v2h-1zM0 9h5v1h-5z"/><path id="p3" d="M1 0h3v1h-3zM0 1h1v1h-1zM4 1h1v3h-1zM1 4h3v1h-3zM4 5h1v4h-1zM0 8h1v1h-1zM1 9h3v1h-3z"/><path id="p4" d="M3 0h1v1h-1zM2 1h2v2h-2zM1 3h1v2h-1zM3 3h1v4h-1zM0 5h1v2h-1zM0 7h5v1h-5zM3 8h1v2h-1z"/><path id="p5" d="M0 0h5v1h-5zM0 1h1v3h-1zM0 4h4v1h-4zM0 5h1v1h-1zM4 5h1v4h-1zM0 8h1v1h-1zM1 9h3v1h-3z"/><path id="p6" d="M1 0h3v1h-3zM0 1h1v3h-1zM4 1h1v1h-1zM0 4h4v1h-4zM0 5h1v4h-1zM4 5h1v4h-1zM1 9h3v1h-3z"/><path id="p7" d="M0 0h5v1h-5zM4 1h1v2h-1zM3 3h1v3h-1zM2 6h1v4h-1z"/><path id="p8" d="M1 0h3v1h-3zM0 1h1v3h-1zM4 1h1v3h-1zM1 4h3v1h-3zM0 5h1v4h-1zM4 5h1v4h-1zM1 9h3v1h-3z"/><path id="p9" d="M1 0h3v1h-3zM0 1h1v4h-1zM4 1h1v4h-1zM1 5h4v1h-4zM4 6h1v3h-1zM0 8h1v1h-1zM1 9h3v1h-3z"/><path id="pc" d="M0 8h1v3h-1z"/><path id="ps" d="M4 0h1v2h-1zM3 2h1v2h-1zM2 4h1v2h-1zM1 6h1v2h-1zM0 8h1v2h-1zM-1 10h1v2h-1z"/><path id="pm" d="M0 5h5v1h-5z"/><path id="kad6d" d="M1 0h8v1h-8zM8 1h1v2h-1zM7 3h1v1h-1zM0 4h10v1h-10zM5 5h1v2h-1zM1 7h8v1h-8zM8 8h1v3h-1z"/><path id="kace0" d="M1 0h8v1h-8zM8 1h1v6h-1zM3 4h1v5h-1zM7 7h1v1h-1zM0 9h10v1h-10z"/><path id="kc8fc" d="M1 0h8v1h-8zM5 1h1v1h-1zM4 2h1v1h-1zM6 2h1v1h-1zM3 3h1v1h-1zM7 3h1v1h-1zM1 4h2v1h-2zM8 4h1v1h-1zM0 7h10v1h-10zM5 8h1v3h-1z"/><path id="kc885" d="M1 0h8v1h-8zM4 1h2v1h-2zM3 2h1v1h-1zM6 2h1v1h-1zM1 3h2v1h-2zM7 3h2v1h-2zM5 4h1v1h-1zM0 5h10v1h-10zM2 7h6v1h-6zM1 8h1v2h-1zM8 8h1v2h-1zM2 10h6v1h-6z"/><path id="kd1b5" d="M1 0h8v1h-8zM1 1h1v1h-1zM1 2h8v1h-8zM1 3h1v1h-1zM1 4h8v1h-8zM5 5h1v1h-1zM0 6h10v1h-10zM2 8h6v1h-6zM1 9h1v1h-1zM8 9h1v1h-1zM2 10h6v1h-6z"/><path id="kc548" d="M1 0h4v1h-4zM8 0h1v3h-1zM0 1h1v4h-1zM5 1h1v4h-1zM8 3h3v1h-3zM8 4h1v4h-1zM1 5h4v1h-4zM1 8h1v2h-1zM1 10h8v1h-8z"/><path id="kd55c" d="M1 0h3v1h-3zM8 0h1v3h-1zM-1 2h7v1h-7zM1 3h1v1h-1zM3 3h1v1h-1zM8 3h3v1h-3zM0 4h1v2h-1zM4 4h1v2h-1zM8 4h1v4h-1zM1 6h3v1h-3zM1 8h1v2h-1zM1 10h8v1h-8z"/><path id="kc804" d="M0 0h7v1h-7zM8 0h1v2h-1zM3 1h1v2h-1zM6 2h3v1h-3zM2 3h1v2h-1zM4 3h1v1h-1zM8 3h1v5h-1zM5 4h1v1h-1zM1 5h1v1h-1zM6 5h1v1h-1zM0 6h1v1h-1zM1 8h1v2h-1zM1 10h8v1h-8z"/><path id="kc0b0" d="M3 0h1v3h-1zM8 0h1v3h-1zM2 3h1v2h-1zM4 3h1v1h-1zM8 3h3v1h-3zM5 4h1v1h-1zM8 4h1v4h-1zM1 5h1v1h-1zM6 5h1v1h-1zM0 6h1v1h-1zM1 8h1v2h-1zM1 10h8v1h-8z"/><path id="kae08" d="M1 0h8v1h-8zM8 1h1v2h-1zM7 3h1v1h-1zM0 4h10v1h-10zM1 7h8v1h-8zM1 8h1v2h-1zM8 8h1v2h-1zM1 10h8v1h-8z"/><path id="kd68c" d="M2 0h3v1h-3zM8 0h1v11h-1zM0 2h7v1h-7zM2 4h3v1h-3zM1 5h1v2h-1zM5 5h1v2h-1zM2 7h3v1h-3zM3 8h1v1h-1zM0 9h7v1h-7z"/><path id="kc0ac" d="M3 0h1v5h-1zM8 0h1v5h-1zM2 5h1v2h-1zM4 5h1v2h-1zM8 5h3v1h-3zM8 6h1v5h-1zM1 7h1v2h-1zM5 7h1v2h-1zM0 9h1v1h-1zM6 9h1v1h-1z"/><path id="kc77c" d="M1 0h4v1h-4zM8 0h1v5h-1zM0 1h1v3h-1zM5 1h1v3h-1zM1 4h4v1h-4zM1 6h8v1h-8zM8 7h1v1h-1zM1 8h8v1h-8zM1 9h1v1h-1zM1 10h8v1h-8z"/><path id="kc790" d="M0 0h7v1h-7zM8 0h1v5h-1zM3 1h1v4h-1zM2 5h1v2h-1zM4 5h1v2h-1zM8 5h3v1h-3zM8 6h1v5h-1zM1 7h1v2h-1zM5 7h1v2h-1zM0 9h1v1h-1zM6 9h1v1h-1z"/><path id="kc2dc" d="M3 0h1v5h-1zM8 0h1v11h-1zM2 5h1v2h-1zM4 5h1v2h-1zM1 7h1v2h-1zM5 7h1v2h-1zM0 9h1v1h-1zM6 9h1v1h-1z"/><path id="kbd84" d="M1 0h1v2h-1zM8 0h1v2h-1zM1 2h8v1h-8zM1 3h1v1h-1zM8 3h1v1h-1zM1 4h8v1h-8zM0 6h10v1h-10zM5 7h1v2h-1zM1 8h1v2h-1zM1 10h8v1h-8z"/><path id="kae30" d="M0 0h6v1h-6zM8 0h1v11h-1zM5 1h1v4h-1zM4 5h1v2h-1zM3 7h1v1h-1zM2 8h1v1h-1zM0 9h2v1h-2z"/><path id="kb300" d="M0 0h4v1h-4zM5 0h1v5h-1zM8 0h1v5h-1zM0 1h1v8h-1zM5 5h4v1h-4zM5 6h1v5h-1zM8 6h1v5h-1zM0 9h4v1h-4z"/><path id="kbe44" d="M0 0h1v4h-1zM5 0h1v4h-1zM8 0h1v11h-1zM0 4h6v1h-6zM0 5h1v4h-1zM5 5h1v4h-1zM0 9h6v1h-6z"/><path id="k59" d="M0 0h1v2h-1zM6 0h1v2h-1zM1 2h1v2h-1zM5 2h1v2h-1zM2 4h1v2h-1zM4 4h1v2h-1zM3 6h1v4h-1z"/><path id="k41" d="M3 0h1v2h-1zM2 2h1v2h-1zM4 2h1v2h-1zM1 4h1v2h-1zM5 4h1v2h-1zM1 6h5v1h-5zM0 7h1v3h-1zM6 7h1v3h-1z"/><path id="k42" d="M0 0h5v1h-5zM0 1h1v3h-1zM5 1h1v3h-1zM0 4h5v1h-5zM0 5h1v4h-1zM5 5h1v4h-1zM0 9h5v1h-5z"/><path id="k43" d="M2 0h4v1h-4zM1 1h1v1h-1zM6 1h1v1h-1zM0 2h1v6h-1zM1 8h1v1h-1zM6 8h1v1h-1zM2 9h4v1h-4z"/><path id="k44" d="M0 0h4v1h-4zM0 1h1v8h-1zM4 1h1v1h-1zM5 2h1v6h-1zM4 8h1v1h-1zM0 9h4v1h-4z"/><path id="k50" d="M0 0h5v1h-5zM0 1h1v4h-1zM5 1h1v4h-1zM0 5h5v1h-5zM0 6h1v4h-1z"/></defs></svg><svg style="position:absolute;left:0;top:0" width="975" height="698" shape-rendering="crispEdges"><g fill="#fff"><use href="#kc77c" x="20" y="27"/><use href="#kc790" x="40" y="27"/><use href="#kad6d" x="74" y="13"/><use href="#kace0" x="86" y="13"/><use href="#p1" x="98" y="13"/><use href="#k59" x="104" y="13"/><use href="#kad6d" x="124" y="13"/><use href="#kace0" x="136" y="13"/><use href="#p2" x="148" y="13"/><use href="#k59" x="154" y="13"/><use href="#kad6d" x="174" y="13"/><use href="#kace0" x="186" y="13"/><use href="#p3" x="198" y="13"/><use href="#k59" x="204" y="13"/><use href="#kad6d" x="224" y="13"/><use href="#kace0" x="236" y="13"/><use href="#p5" x="248" y="13"/><use href="#k59" x="254" y="13"/><use href="#kad6d" x="271" y="13"/><use href="#kace0" x="283" y="13"/><use href="#p1" x="295" y="13"/><use href="#p0" x="301" y="13"/><use href="#k59" x="307" y="13"/><use href="#kad6d" x="321" y="13"/><use href="#kace0" x="333" y="13"/><use href="#p2" x="345" y="13"/><use href="#p0" x="351" y="13"/><use href="#k59" x="357" y="13"/><use href="#kad6d" x="371" y="13"/><use href="#kace0" x="383" y="13"/><use href="#p3" x="395" y="13"/><use href="#p0" x="401" y="13"/><use href="#k59" x="407" y="13"/><use href="#kad6d" x="421" y="13"/><use href="#kace0" x="433" y="13"/><use href="#p5" x="445" y="13"/><use href="#p0" x="451" y="13"/><use href="#k59" x="457" y="13"/><use href="#kad6d" x="472" y="13"/><use href="#kc8fc" x="484" y="13"/><use href="#p1" x="496" y="13"/><use href="#kc885" x="502" y="13"/><use href="#kd1b5" x="525" y="13"/><use href="#kc548" x="537" y="13"/><use href="#p9" x="549" y="13"/><use href="#p1" x="555" y="13"/><use href="#kd1b5" x="574" y="13"/><use href="#kc548" x="586" y="13"/><use href="#p1" x="598" y="13"/><use href="#k59" x="604" y="13"/><use href="#kd1b5" x="624" y="13"/><use href="#kc548" x="636" y="13"/><use href="#p2" x="648" y="13"/><use href="#k59" x="654" y="13"/><use href="#kd55c" x="674" y="13"/><use href="#kc804" x="686" y="13"/><use href="#p3" x="698" y="13"/><use href="#k59" x="704" y="13"/><use href="#kc0b0" x="724" y="13"/><use href="#kae08" x="736" y="13"/><use href="#p1" x="748" y="13"/><use href="#k59" x="754" y="13"/><use href="#kd68c" x="770" y="13"/><use href="#kc0ac" x="782" y="13"/><use href="#k41" x="794" y="13"/><use href="#k41" x="802" y="13"/><use href="#pm" x="810" y="13"/><use href="#kd68c" x="819" y="13"/><use href="#kc0ac" x="831" y="13"/><use href="#k42" x="843" y="13"/><use href="#k42" x="851" y="13"/><use href="#k42" x="859" y="13"/><use href="#pm" x="867" y="13"/><use href="#k43" x="930" y="13"/><use href="#k50" x="939" y="13"/><use href="#p9" x="947" y="13"/><use href="#p1" x="953" y="13"/><use href="#k44" x="959" y="13"/><use href="#kad6d" x="566" y="347"/><use href="#kace0" x="578" y="347"/><use href="#p5" x="590" y="347"/><use href="#k59" x="596" y="347"/><use href="#p1" x="654" y="348"/><use href="#p1" x="660" y="348"/><use href="#kc2dc" x="666" y="348"/><use href="#p3" x="678" y="348"/><use href="#p0" x="684" y="348"/><use href="#kbd84" x="690" y="348"/><use href="#p1" x="739" y="348"/><use href="#p6" x="745" y="348"/><use href="#kc2dc" x="751" y="348"/><use href="#p0" x="763" y="348"/><use href="#p0" x="769" y="348"/><use href="#kbd84" x="775" y="348"/><use href="#kc804" x="835" y="348"/><use href="#kae30" x="847" y="348"/><use href="#kc804" x="907" y="348"/><use href="#kae30" x="919" y="348"/><use href="#kb300" x="931" y="348"/><use href="#kbe44" x="943" y="348"/></g><g fill="#000"><use href="#k43" x="890" y="13"/><use href="#k44" x="899" y="13"/><use href="#p2" x="12" y="70"/><use href="#p5" x="18" y="70"/><use href="#ps" x="24" y="70"/><use href="#p0" x="30" y="70"/><use href="#p5" x="36" y="70"/><use href="#ps" x="42" y="70"/><use href="#p2" x="48" y="70"/><use href="#p3" x="54" y="70"/><use href="#p2" x="12" y="100"/><use href="#p5" x="18" y="100"/><use href="#ps" x="24" y="100"/><use href="#p0" x="30" y="100"/><use href="#p5" x="36" y="100"/><use href="#ps" x="42" y="100"/><use href="#p2" x="48" y="100"/><use href="#p2" x="54" y="100"/><use href="#p2" x="86" y="100"/><use href="#pc" x="92" y="100"/><use href="#p2" x="96" y="100"/><use href="#p8" x="102" y="100"/><use href="#p0" x="108" y="100"/><use href="#p2" x="136" y="100"/><use href="#pc" x="142" y="100"/><use href="#p3" x="146" y="100"/><use href="#p4" x="152" y="100"/><use href="#p1" x="158" y="100"/><use href="#p2" x="186" y="100"/><use href="#pc" x="192" y="100"/><use href="#p3" x="196" y="100"/><use href="#p3" x="202" y="100"/><use href="#p6" x="208" y="100"/><use href="#p2" x="236" y="100"/><use href="#pc" x="242" y="100"/><use href="#p4" x="246" y="100"/><use href="#p9" x="252" y="100"/><use href="#p3" x="258" y="100"/><use href="#p2" x="286" y="100"/><use href="#pc" x="292" y="100"/><use href="#p7" x="296" y="100"/><use href="#p5" x="302" y="100"/><use href="#p5" x="308" y="100"/><use href="#p2" x="336" y="100"/><use href="#pc" x="342" y="100"/><use href="#p7" x="346" y="100"/><use href="#p2" x="352" y="100"/><use href="#p2" x="358" y="100"/><use href="#p2" x="386" y="100"/><use href="#pc" x="392" y="100"/><use href="#p6" x="396" y="100"/><use href="#p3" x="402" y="100"/><use href="#p2" x="408" y="100"/><use href="#p2" x="436" y="100"/><use href="#pc" x="442" y="100"/><use href="#p5" x="446" y="100"/><use href="#p2" x="452" y="100"/><use href="#p5" x="458" y="100"/><use href="#p2" x="486" y="100"/><use href="#pc" x="492" y="100"/><use href="#p6" x="496" y="100"/><use href="#p3" x="502" y="100"/><use href="#p6" x="508" y="100"/><use href="#p2" x="536" y="100"/><use href="#pc" x="542" y="100"/><use href="#p5" x="546" y="100"/><use href="#p2" x="552" y="100"/><use href="#p0" x="558" y="100"/><use href="#p2" x="586" y="100"/><use href="#pc" x="592" y="100"/><use href="#p2" x="596" y="100"/><use href="#p9" x="602" y="100"/><use href="#p3" x="608" y="100"/><use href="#p2" x="636" y="100"/><use href="#pc" x="642" y="100"/><use href="#p3" x="646" y="100"/><use href="#p2" x="652" y="100"/><use href="#p8" x="658" y="100"/><use href="#p2" x="686" y="100"/><use href="#pc" x="692" y="100"/><use href="#p6" x="696" y="100"/><use href="#p2" x="702" y="100"/><use href="#p9" x="708" y="100"/><use href="#p2" x="736" y="100"/><use href="#pc" x="742" y="100"/><use href="#p4" x="746" y="100"/><use href="#p9" x="752" y="100"/><use href="#p0" x="758" y="100"/><use href="#p2" x="786" y="100"/><use href="#pc" x="792" y="100"/><use href="#p9" x="796" y="100"/><use href="#p1" x="802" y="100"/><use href="#p7" x="808" y="100"/><use href="#p8" x="841" y="100"/><use href="#pc" x="847" y="100"/><use href="#p6" x="851" y="100"/><use href="#p5" x="857" y="100"/><use href="#p8" x="863" y="100"/><use href="#p2" x="891" y="100"/><use href="#pc" x="897" y="100"/><use href="#p6" x="901" y="100"/><use href="#p7" x="907" y="100"/><use href="#p0" x="913" y="100"/><use href="#p2" x="941" y="100"/><use href="#pc" x="947" y="100"/><use href="#p9" x="951" y="100"/><use href="#p1" x="957" y="100"/><use href="#p0" x="963" y="100"/><use href="#p2" x="12" y="129"/><use href="#p5" x="18" y="129"/><use href="#ps" x="24" y="129"/><use href="#p0" x="30" y="129"/><use href="#p5" x="36" y="129"/><use href="#ps" x="42" y="129"/><use href="#p2" x="48" y="129"/><use href="#p1" x="54" y="129"/><use href="#p2" x="86" y="129"/><use href="#pc" x="92" y="129"/><use href="#p2" x="96" y="129"/><use href="#p8" x="102" y="129"/><use href="#p1" x="108" y="129"/><use href="#p2" x="136" y="129"/><use href="#pc" x="142" y="129"/><use href="#p3" x="146" y="129"/><use href="#p4" x="152" y="129"/><use href="#p7" x="158" y="129"/><use href="#p2" x="186" y="129"/><use href="#pc" x="192" y="129"/><use href="#p3" x="196" y="129"/><use href="#p4" x="202" y="129"/><use href="#p5" x="208" y="129"/><use href="#p2" x="236" y="129"/><use href="#pc" x="242" y="129"/><use href="#p4" x="246" y="129"/><use href="#p9" x="252" y="129"/><use href="#p8" x="258" y="129"/><use href="#p2" x="286" y="129"/><use href="#pc" x="292" y="129"/><use href="#p7" x="296" y="129"/><use href="#p6" x="302" y="129"/><use href="#p0" x="308" y="129"/><use href="#p2" x="336" y="129"/><use href="#pc" x="342" y="129"/><use href="#p7" x="346" y="129"/><use href="#p2" x="352" y="129"/><use href="#p0" x="358" y="129"/><use href="#p2" x="386" y="129"/><use href="#pc" x="392" y="129"/><use href="#p6" x="396" y="129"/><use href="#p2" x="402" y="129"/><use href="#p9" x="408" y="129"/><use href="#p2" x="436" y="129"/><use href="#pc" x="442" y="129"/><use href="#p4" x="446" y="129"/><use href="#p9" x="452" y="129"/><use href="#p0" x="458" y="129"/><use href="#p2" x="486" y="129"/><use href="#pc" x="492" y="129"/><use href="#p6" x="496" y="129"/><use href="#p4" x="502" y="129"/><use href="#p1" x="508" y="129"/><use href="#p2" x="536" y="129"/><use href="#pc" x="542" y="129"/><use href="#p5" x="546" y="129"/><use href="#p2" x="552" y="129"/><use href="#p0" x="558" y="129"/><use href="#p2" x="586" y="129"/><use href="#pc" x="592" y="129"/><use href="#p3" x="596" y="129"/><use href="#p0" x="602" y="129"/><use href="#p5" x="608" y="129"/><use href="#p2" x="636" y="129"/><use href="#pc" x="642" y="129"/><use href="#p3" x="646" y="129"/><use href="#p4" x="652" y="129"/><use href="#p4" x="658" y="129"/><use href="#p2" x="686" y="129"/><use href="#pc" x="692" y="129"/><use href="#p6" x="696" y="129"/><use href="#p3" x="702" y="129"/><use href="#p4" x="708" y="129"/><use href="#p2" x="736" y="129"/><use href="#pc" x="742" y="129"/><use href="#p4" x="746" y="129"/><use href="#p9" x="752" y="129"/><use href="#p1" x="758" y="129"/><use href="#p2" x="786" y="129"/><use href="#pc" x="792" y="129"/><use href="#p9" x="796" y="129"/><use href="#p2" x="802" y="129"/><use href="#p1" x="808" y="129"/><use href="#p8" x="841" y="129"/><use href="#pc" x="847" y="129"/><use href="#p6" x="851" y="129"/><use href="#p6" x="857" y="129"/><use href="#p9" x="863" y="129"/><use href="#p2" x="891" y="129"/><use href="#pc" x="897" y="129"/><use href="#p6" x="901" y="129"/><use href="#p7" x="907" y="129"/><use href="#p0" x="913" y="129"/><use href="#p2" x="941" y="129"/><use href="#pc" x="947" y="129"/><use href="#p9" x="951" y="129"/><use href="#p1" x="957" y="129"/><use href="#p0" x="963" y="129"/><use href="#p2" x="12" y="159"/><use href="#p5" x="18" y="159"/><use href="#ps" x="24" y="159"/><use href="#p0" x="30" y="159"/><use href="#p5" x="36" y="159"/><use href="#ps" x="42" y="159"/><use href="#p2" x="48" y="159"/><use href="#p0" x="54" y="159"/><use href="#p2" x="86" y="159"/><use href="#pc" x="92" y="159"/><use href="#p2" x="96" y="159"/><use href="#p8" x="102" y="159"/><use href="#p1" x="108" y="159"/><use href="#p2" x="136" y="159"/><use href="#pc" x="142" y="159"/><use href="#p3" x="146" y="159"/><use href="#p4" x="152" y="159"/><use href="#p0" x="158" y="159"/><use href="#p2" x="186" y="159"/><use href="#pc" x="192" y="159"/><use href="#p3" x="196" y="159"/><use href="#p3" x="202" y="159"/><use href="#p0" x="208" y="159"/><use href="#p2" x="236" y="159"/><use href="#pc" x="242" y="159"/><use href="#p4" x="246" y="159"/><use href="#p6" x="252" y="159"/><use href="#p7" x="258" y="159"/><use href="#p2" x="286" y="159"/><use href="#pc" x="292" y="159"/><use href="#p7" x="296" y="159"/><use href="#p1" x="302" y="159"/><use href="#p3" x="308" y="159"/><use href="#p2" x="336" y="159"/><use href="#pc" x="342" y="159"/><use href="#p6" x="346" y="159"/><use href="#p8" x="352" y="159"/><use href="#p8" x="358" y="159"/><use href="#p2" x="386" y="159"/><use href="#pc" x="392" y="159"/><use href="#p5" x="396" y="159"/><use href="#p9" x="402" y="159"/><use href="#p9" x="408" y="159"/><use href="#p2" x="436" y="159"/><use href="#pc" x="442" y="159"/><use href="#p4" x="446" y="159"/><use href="#p6" x="452" y="159"/><use href="#p1" x="458" y="159"/><use href="#p2" x="486" y="159"/><use href="#pc" x="492" y="159"/><use href="#p6" x="496" y="159"/><use href="#p1" x="502" y="159"/><use href="#p0" x="508" y="159"/><use href="#p2" x="536" y="159"/><use href="#pc" x="542" y="159"/><use href="#p5" x="546" y="159"/><use href="#p1" x="552" y="159"/><use href="#p8" x="558" y="159"/><use href="#p2" x="586" y="159"/><use href="#pc" x="592" y="159"/><use href="#p3" x="596" y="159"/><use href="#p0" x="602" y="159"/><use href="#p2" x="608" y="159"/><use href="#p2" x="636" y="159"/><use href="#pc" x="642" y="159"/><use href="#p3" x="646" y="159"/><use href="#p4" x="652" y="159"/><use href="#p1" x="658" y="159"/><use href="#p2" x="686" y="159"/><use href="#pc" x="692" y="159"/><use href="#p6" x="696" y="159"/><use href="#p1" x="702" y="159"/><use href="#p8" x="708" y="159"/><use href="#p2" x="736" y="159"/><use href="#pc" x="742" y="159"/><use href="#p4" x="746" y="159"/><use href="#p8" x="752" y="159"/><use href="#p4" x="758" y="159"/><use href="#p2" x="786" y="159"/><use href="#pc" x="792" y="159"/><use href="#p9" x="796" y="159"/><use href="#p0" x="802" y="159"/><use href="#p7" x="808" y="159"/><use href="#p8" x="841" y="159"/><use href="#pc" x="847" y="159"/><use href="#p6" x="851" y="159"/><use href="#p5" x="857" y="159"/><use href="#p3" x="863" y="159"/><use href="#p2" x="891" y="159"/><use href="#pc" x="897" y="159"/><use href="#p6" x="901" y="159"/><use href="#p8" x="907" y="159"/><use href="#p0" x="913" y="159"/><use href="#p2" x="941" y="159"/><use href="#pc" x="947" y="159"/><use href="#p9" x="951" y="159"/><use href="#p1" x="957" y="159"/><use href="#p0" x="963" y="159"/><use href="#p2" x="12" y="188"/><use href="#p5" x="18" y="188"/><use href="#ps" x="24" y="188"/><use href="#p0" x="30" y="188"/><use href="#p5" x="36" y="188"/><use href="#ps" x="42" y="188"/><use href="#p1" x="48" y="188"/><use href="#p9" x="54" y="188"/><use href="#p2" x="86" y="188"/><use href="#pc" x="92" y="188"/><use href="#p2" x="96" y="188"/><use href="#p9" x="102" y="188"/><use href="#p5" x="108" y="188"/><use href="#p2" x="136" y="188"/><use href="#pc" x="142" y="188"/><use href="#p3" x="146" y="188"/><use href="#p6" x="152" y="188"/><use href="#p3" x="158" y="188"/><use href="#p2" x="186" y="188"/><use href="#pc" x="192" y="188"/><use href="#p3" x="196" y="188"/><use href="#p6" x="202" y="188"/><use href="#p6" x="208" y="188"/><use href="#p2" x="236" y="188"/><use href="#pc" x="242" y="188"/><use href="#p5" x="246" y="188"/><use href="#p0" x="252" y="188"/><use href="#p1" x="258" y="188"/><use href="#p2" x="286" y="188"/><use href="#pc" x="292" y="188"/><use href="#p7" x="296" y="188"/><use href="#p4" x="302" y="188"/><use href="#p7" x="308" y="188"/><use href="#p2" x="336" y="188"/><use href="#pc" x="342" y="188"/><use href="#p7" x="346" y="188"/><use href="#p2" x="352" y="188"/><use href="#p0" x="358" y="188"/><use href="#p2" x="386" y="188"/><use href="#pc" x="392" y="188"/><use href="#p6" x="396" y="188"/><use href="#p3" x="402" y="188"/><use href="#p1" x="408" y="188"/><use href="#p2" x="436" y="188"/><use href="#pc" x="442" y="188"/><use href="#p4" x="446" y="188"/><use href="#p7" x="452" y="188"/><use href="#p3" x="458" y="188"/><use href="#p2" x="486" y="188"/><use href="#pc" x="492" y="188"/><use href="#p6" x="496" y="188"/><use href="#p3" x="502" y="188"/><use href="#p8" x="508" y="188"/><use href="#p2" x="536" y="188"/><use href="#pc" x="542" y="188"/><use href="#p5" x="546" y="188"/><use href="#p2" x="552" y="188"/><use href="#p2" x="558" y="188"/><use href="#p2" x="586" y="188"/><use href="#pc" x="592" y="188"/><use href="#p3" x="596" y="188"/><use href="#p2" x="602" y="188"/><use href="#p3" x="608" y="188"/><use href="#p2" x="636" y="188"/><use href="#pc" x="642" y="188"/><use href="#p3" x="646" y="188"/><use href="#p5" x="652" y="188"/><use href="#p9" x="658" y="188"/><use href="#p2" x="686" y="188"/><use href="#pc" x="692" y="188"/><use href="#p6" x="696" y="188"/><use href="#p4" x="702" y="188"/><use href="#p6" x="708" y="188"/><use href="#p2" x="736" y="188"/><use href="#pc" x="742" y="188"/><use href="#p5" x="746" y="188"/><use href="#p0" x="752" y="188"/><use href="#p1" x="758" y="188"/><use href="#p2" x="786" y="188"/><use href="#pc" x="792" y="188"/><use href="#p9" x="796" y="188"/><use href="#p3" x="802" y="188"/><use href="#p5" x="808" y="188"/><use href="#p8" x="841" y="188"/><use href="#pc" x="847" y="188"/><use href="#p6" x="851" y="188"/><use href="#p8" x="857" y="188"/><use href="#p2" x="863" y="188"/><use href="#p2" x="891" y="188"/><use href="#pc" x="897" y="188"/><use href="#p7" x="901" y="188"/><use href="#p1" x="907" y="188"/><use href="#p0" x="913" y="188"/><use href="#p2" x="941" y="188"/><use href="#pc" x="947" y="188"/><use href="#p9" x="951" y="188"/><use href="#p1" x="957" y="188"/><use href="#p0" x="963" y="188"/><use href="#p2" x="12" y="218"/><use href="#p5" x="18" y="218"/><use href="#ps" x="24" y="218"/><use href="#p0" x="30" y="218"/><use href="#p5" x="36" y="218"/><use href="#ps" x="42" y="218"/><use href="#p1" x="48" y="218"/><use href="#p6" x="54" y="218"/><use href="#p2" x="86" y="218"/><use href="#pc" x="92" y="218"/><use href="#p2" x="96" y="218"/><use href="#p8" x="102" y="218"/><use href="#p8" x="108" y="218"/><use href="#p2" x="136" y="218"/><use href="#pc" x="142" y="218"/><use href="#p3" x="146" y="218"/><use href="#p3" x="152" y="218"/><use href="#p7" x="158" y="218"/><use href="#p2" x="186" y="218"/><use href="#pc" x="192" y="218"/><use href="#p3" x="196" y="218"/><use href="#p1" x="202" y="218"/><use href="#p9" x="208" y="218"/><use href="#p2" x="236" y="218"/><use href="#pc" x="242" y="218"/><use href="#p4" x="246" y="218"/><use href="#p4" x="252" y="218"/><use href="#p5" x="258" y="218"/><use href="#p2" x="286" y="218"/><use href="#pc" x="292" y="218"/><use href="#p6" x="296" y="218"/><use href="#p7" x="302" y="218"/><use href="#p6" x="308" y="218"/><use href="#p2" x="336" y="218"/><use href="#pc" x="342" y="218"/><use href="#p6" x="346" y="218"/><use href="#p6" x="352" y="218"/><use href="#p5" x="358" y="218"/><use href="#p2" x="386" y="218"/><use href="#pc" x="392" y="218"/><use href="#p5" x="396" y="218"/><use href="#p6" x="402" y="218"/><use href="#p9" x="408" y="218"/><use href="#p2" x="436" y="218"/><use href="#pc" x="442" y="218"/><use href="#p4" x="446" y="218"/><use href="#p1" x="452" y="218"/><use href="#p4" x="458" y="218"/><use href="#p2" x="486" y="218"/><use href="#pc" x="492" y="218"/><use href="#p5" x="496" y="218"/><use href="#p9" x="502" y="218"/><use href="#p5" x="508" y="218"/><use href="#p2" x="536" y="218"/><use href="#pc" x="542" y="218"/><use href="#p5" x="546" y="218"/><use href="#p1" x="552" y="218"/><use href="#p9" x="558" y="218"/><use href="#p2" x="586" y="218"/><use href="#pc" x="592" y="218"/><use href="#p3" x="596" y="218"/><use href="#p1" x="602" y="218"/><use href="#p6" x="608" y="218"/><use href="#p2" x="636" y="218"/><use href="#pc" x="642" y="218"/><use href="#p3" x="646" y="218"/><use href="#p3" x="652" y="218"/><use href="#p2" x="658" y="218"/><use href="#p2" x="686" y="218"/><use href="#pc" x="692" y="218"/><use href="#p6" x="696" y="218"/><use href="#p0" x="702" y="218"/><use href="#p2" x="708" y="218"/><use href="#p2" x="736" y="218"/><use href="#pc" x="742" y="218"/><use href="#p4" x="746" y="218"/><use href="#p9" x="752" y="218"/><use href="#p6" x="758" y="218"/><use href="#p2" x="786" y="218"/><use href="#pc" x="792" y="218"/><use href="#p8" x="796" y="218"/><use href="#p9" x="802" y="218"/><use href="#p6" x="808" y="218"/><use href="#p8" x="841" y="218"/><use href="#pc" x="847" y="218"/><use href="#p6" x="851" y="218"/><use href="#p4" x="857" y="218"/><use href="#p7" x="863" y="218"/><use href="#p2" x="891" y="218"/><use href="#pc" x="897" y="218"/><use href="#p7" x="901" y="218"/><use href="#p0" x="907" y="218"/><use href="#p0" x="913" y="218"/><use href="#p2" x="941" y="218"/><use href="#pc" x="947" y="218"/><use href="#p9" x="951" y="218"/><use href="#p1" x="957" y="218"/><use href="#p0" x="963" y="218"/><use href="#p2" x="12" y="247"/><use href="#p5" x="18" y="247"/><use href="#ps" x="24" y="247"/><use href="#p0" x="30" y="247"/><use href="#p5" x="36" y="247"/><use href="#ps" x="42" y="247"/><use href="#p1" x="48" y="247"/><use href="#p5" x="54" y="247"/><use href="#p2" x="86" y="247"/><use href="#pc" x="92" y="247"/><use href="#p3" x="96" y="247"/><use href="#p1" x="102" y="247"/><use href="#p4" x="108" y="247"/><use href="#p2" x="136" y="247"/><use href="#pc" x="142" y="247"/><use href="#p3" x="146" y="247"/><use href="#p7" x="152" y="247"/><use href="#p0" x="158" y="247"/><use href="#p2" x="186" y="247"/><use href="#pc" x="192" y="247"/><use href="#p3" x="196" y="247"/><use href="#p6" x="202" y="247"/><use href="#p2" x="208" y="247"/><use href="#p2" x="236" y="247"/><use href="#pc" x="242" y="247"/><use href="#p4" x="246" y="247"/><use href="#p9" x="252" y="247"/><use href="#p6" x="258" y="247"/><use href="#p2" x="286" y="247"/><use href="#pc" x="292" y="247"/><use href="#p7" x="296" y="247"/><use href="#p2" x="302" y="247"/><use href="#p7" x="308" y="247"/><use href="#p2" x="336" y="247"/><use href="#pc" x="342" y="247"/><use href="#p6" x="346" y="247"/><use href="#p8" x="352" y="247"/><use href="#p9" x="358" y="247"/><use href="#p2" x="386" y="247"/><use href="#pc" x="392" y="247"/><use href="#p5" x="396" y="247"/><use href="#p8" x="402" y="247"/><use href="#p9" x="408" y="247"/><use href="#p2" x="436" y="247"/><use href="#pc" x="442" y="247"/><use href="#p4" x="446" y="247"/><use href="#p3" x="452" y="247"/><use href="#p1" x="458" y="247"/><use href="#p2" x="486" y="247"/><use href="#pc" x="492" y="247"/><use href="#p6" x="496" y="247"/><use href="#p3" x="502" y="247"/><use href="#p8" x="508" y="247"/><use href="#p2" x="536" y="247"/><use href="#pc" x="542" y="247"/><use href="#p5" x="546" y="247"/><use href="#p2" x="552" y="247"/><use href="#p3" x="558" y="247"/><use href="#p2" x="586" y="247"/><use href="#pc" x="592" y="247"/><use href="#p3" x="596" y="247"/><use href="#p4" x="602" y="247"/><use href="#p2" x="608" y="247"/><use href="#p2" x="636" y="247"/><use href="#pc" x="642" y="247"/><use href="#p3" x="646" y="247"/><use href="#p6" x="652" y="247"/><use href="#p7" x="658" y="247"/><use href="#p2" x="686" y="247"/><use href="#pc" x="692" y="247"/><use href="#p6" x="696" y="247"/><use href="#p3" x="702" y="247"/><use href="#p5" x="708" y="247"/><use href="#p2" x="736" y="247"/><use href="#pc" x="742" y="247"/><use href="#p5" x="746" y="247"/><use href="#p2" x="752" y="247"/><use href="#p1" x="758" y="247"/><use href="#p2" x="786" y="247"/><use href="#pc" x="792" y="247"/><use href="#p9" x="796" y="247"/><use href="#p3" x="802" y="247"/><use href="#p1" x="808" y="247"/><use href="#p8" x="841" y="247"/><use href="#pc" x="847" y="247"/><use href="#p6" x="851" y="247"/><use href="#p8" x="857" y="247"/><use href="#p1" x="863" y="247"/><use href="#p2" x="891" y="247"/><use href="#pc" x="897" y="247"/><use href="#p6" x="901" y="247"/><use href="#p9" x="907" y="247"/><use href="#p0" x="913" y="247"/><use href="#p2" x="941" y="247"/><use href="#pc" x="947" y="247"/><use href="#p9" x="951" y="247"/><use href="#p1" x="957" y="247"/><use href="#p0" x="963" y="247"/><use href="#p2" x="12" y="277"/><use href="#p5" x="18" y="277"/><use href="#ps" x="24" y="277"/><use href="#p0" x="30" y="277"/><use href="#p5" x="36" y="277"/><use href="#ps" x="42" y="277"/><use href="#p1" x="48" y="277"/><use href="#p4" x="54" y="277"/><use href="#p2" x="86" y="277"/><use href="#pc" x="92" y="277"/><use href="#p3" x="96" y="277"/><use href="#p1" x="102" y="277"/><use href="#p9" x="108" y="277"/><use href="#p2" x="136" y="277"/><use href="#pc" x="142" y="277"/><use href="#p3" x="146" y="277"/><use href="#p6" x="152" y="277"/><use href="#p9" x="158" y="277"/><use href="#p2" x="186" y="277"/><use href="#pc" x="192" y="277"/><use href="#p3" x="196" y="277"/><use href="#p5" x="202" y="277"/><use href="#p1" x="208" y="277"/><use href="#p2" x="236" y="277"/><use href="#pc" x="242" y="277"/><use href="#p4" x="246" y="277"/><use href="#p8" x="252" y="277"/><use href="#p2" x="258" y="277"/><use href="#p2" x="286" y="277"/><use href="#pc" x="292" y="277"/><use href="#p7" x="296" y="277"/><use href="#p1" x="302" y="277"/><use href="#p8" x="308" y="277"/><use href="#p2" x="336" y="277"/><use href="#pc" x="342" y="277"/><use href="#p6" x="346" y="277"/><use href="#p8" x="352" y="277"/><use href="#p3" x="358" y="277"/><use href="#p2" x="386" y="277"/><use href="#pc" x="392" y="277"/><use href="#p5" x="396" y="277"/><use href="#p8" x="402" y="277"/><use href="#p2" x="408" y="277"/><use href="#p2" x="436" y="277"/><use href="#pc" x="442" y="277"/><use href="#p4" x="446" y="277"/><use href="#p2" x="452" y="277"/><use href="#p3" x="458" y="277"/><use href="#p2" x="486" y="277"/><use href="#pc" x="492" y="277"/><use href="#p6" x="496" y="277"/><use href="#p3" x="502" y="277"/><use href="#p3" x="508" y="277"/><use href="#p2" x="536" y="277"/><use href="#pc" x="542" y="277"/><use href="#p5" x="546" y="277"/><use href="#p1" x="552" y="277"/><use href="#p9" x="558" y="277"/><use href="#p2" x="586" y="277"/><use href="#pc" x="592" y="277"/><use href="#p3" x="596" y="277"/><use href="#p4" x="602" y="277"/><use href="#p8" x="608" y="277"/><use href="#p2" x="636" y="277"/><use href="#pc" x="642" y="277"/><use href="#p3" x="646" y="277"/><use href="#p6" x="652" y="277"/><use href="#p5" x="658" y="277"/><use href="#p2" x="686" y="277"/><use href="#pc" x="692" y="277"/><use href="#p6" x="696" y="277"/><use href="#p2" x="702" y="277"/><use href="#p7" x="708" y="277"/><use href="#p2" x="736" y="277"/><use href="#pc" x="742" y="277"/><use href="#p5" x="746" y="277"/><use href="#p2" x="752" y="277"/><use href="#p0" x="758" y="277"/><use href="#p2" x="786" y="277"/><use href="#pc" x="792" y="277"/><use href="#p9" x="796" y="277"/><use href="#p2" x="802" y="277"/><use href="#p4" x="808" y="277"/><use href="#p8" x="841" y="277"/><use href="#pc" x="847" y="277"/><use href="#p6" x="851" y="277"/><use href="#p7" x="857" y="277"/><use href="#p5" x="863" y="277"/><use href="#p2" x="891" y="277"/><use href="#pc" x="897" y="277"/><use href="#p6" x="901" y="277"/><use href="#p7" x="907" y="277"/><use href="#p0" x="913" y="277"/><use href="#p2" x="941" y="277"/><use href="#pc" x="947" y="277"/><use href="#p9" x="951" y="277"/><use href="#p1" x="957" y="277"/><use href="#p0" x="963" y="277"/><use href="#p2" x="12" y="306"/><use href="#p5" x="18" y="306"/><use href="#ps" x="24" y="306"/><use href="#p0" x="30" y="306"/><use href="#p5" x="36" y="306"/><use href="#ps" x="42" y="306"/><use href="#p1" x="48" y="306"/><use href="#p3" x="54" y="306"/><use href="#p2" x="86" y="306"/><use href="#pc" x="92" y="306"/><use href="#p3" x="96" y="306"/><use href="#p4" x="102" y="306"/><use href="#p8" x="108" y="306"/><use href="#p2" x="136" y="306"/><use href="#pc" x="142" y="306"/><use href="#p3" x="146" y="306"/><use href="#p9" x="152" y="306"/><use href="#p3" x="158" y="306"/><use href="#p2" x="186" y="306"/><use href="#pc" x="192" y="306"/><use href="#p3" x="196" y="306"/><use href="#p7" x="202" y="306"/><use href="#p0" x="208" y="306"/><use href="#p2" x="236" y="306"/><use href="#pc" x="242" y="306"/><use href="#p4" x="246" y="306"/><use href="#p9" x="252" y="306"/><use href="#p6" x="258" y="306"/><use href="#p2" x="286" y="306"/><use href="#pc" x="292" y="306"/><use href="#p7" x="296" y="306"/><use href="#p2" x="302" y="306"/><use href="#p2" x="308" y="306"/><use href="#p2" x="336" y="306"/><use href="#pc" x="342" y="306"/><use href="#p6" x="346" y="306"/><use href="#p8" x="352" y="306"/><use href="#p2" x="358" y="306"/><use href="#p2" x="386" y="306"/><use href="#pc" x="392" y="306"/><use href="#p5" x="396" y="306"/><use href="#p9" x="402" y="306"/><use href="#p0" x="408" y="306"/><use href="#p2" x="436" y="306"/><use href="#pc" x="442" y="306"/><use href="#p4" x="446" y="306"/><use href="#p2" x="452" y="306"/><use href="#p9" x="458" y="306"/><use href="#p2" x="486" y="306"/><use href="#pc" x="492" y="306"/><use href="#p6" x="496" y="306"/><use href="#p4" x="502" y="306"/><use href="#p5" x="508" y="306"/><use href="#p2" x="536" y="306"/><use href="#pc" x="542" y="306"/><use href="#p5" x="546" y="306"/><use href="#p1" x="552" y="306"/><use href="#p9" x="558" y="306"/><use href="#p2" x="586" y="306"/><use href="#pc" x="592" y="306"/><use href="#p3" x="596" y="306"/><use href="#p8" x="602" y="306"/><use href="#p2" x="608" y="306"/><use href="#p2" x="636" y="306"/><use href="#pc" x="642" y="306"/><use href="#p3" x="646" y="306"/><use href="#p8" x="652" y="306"/><use href="#p4" x="658" y="306"/><use href="#p2" x="686" y="306"/><use href="#pc" x="692" y="306"/><use href="#p6" x="696" y="306"/><use href="#p3" x="702" y="306"/><use href="#p5" x="708" y="306"/><use href="#p2" x="736" y="306"/><use href="#pc" x="742" y="306"/><use href="#p5" x="746" y="306"/><use href="#p5" x="752" y="306"/><use href="#p1" x="758" y="306"/><use href="#p2" x="786" y="306"/><use href="#pc" x="792" y="306"/><use href="#p9" x="796" y="306"/><use href="#p3" x="802" y="306"/><use href="#p9" x="808" y="306"/><use href="#p8" x="841" y="306"/><use href="#pc" x="847" y="306"/><use href="#p6" x="851" y="306"/><use href="#p9" x="857" y="306"/><use href="#p1" x="863" y="306"/><use href="#p2" x="891" y="306"/><use href="#pc" x="897" y="306"/><use href="#p6" x="901" y="306"/><use href="#p8" x="907" y="306"/><use href="#p0" x="913" y="306"/><use href="#p2" x="941" y="306"/><use href="#pc" x="947" y="306"/><use href="#p9" x="951" y="306"/><use href="#p1" x="957" y="306"/><use href="#p0" x="963" y="306"/><use href="#p2" x="568" y="376"/><use href="#p5" x="574" y="376"/><use href="#ps" x="580" y="376"/><use href="#p0" x="586" y="376"/><use href="#p5" x="592" y="376"/><use href="#ps" x="598" y="376"/><use href="#p2" x="604" y="376"/><use href="#p2" x="610" y="376"/><use href="#p2" x="684" y="376"/><use href="#pc" x="690" y="376"/><use href="#p5" x="694" y="376"/><use href="#p3" x="700" y="376"/><use href="#p0" x="706" y="376"/><use href="#p2" x="769" y="376"/><use href="#pc" x="775" y="376"/><use href="#p4" x="779" y="376"/><use href="#p9" x="785" y="376"/><use href="#p3" x="791" y="376"/><use href="#p2" x="853" y="376"/><use href="#pc" x="859" y="376"/><use href="#p4" x="863" y="376"/><use href="#p9" x="869" y="376"/><use href="#p8" x="875" y="376"/><use href="#p2" x="568" y="405"/><use href="#p5" x="574" y="405"/><use href="#ps" x="580" y="405"/><use href="#p0" x="586" y="405"/><use href="#p5" x="592" y="405"/><use href="#ps" x="598" y="405"/><use href="#p2" x="604" y="405"/><use href="#p1" x="610" y="405"/><use href="#p2" x="684" y="405"/><use href="#pc" x="690" y="405"/><use href="#p5" x="694" y="405"/><use href="#p0" x="700" y="405"/><use href="#p0" x="706" y="405"/><use href="#p2" x="769" y="405"/><use href="#pc" x="775" y="405"/><use href="#p4" x="779" y="405"/><use href="#p9" x="785" y="405"/><use href="#p8" x="791" y="405"/><use href="#p2" x="853" y="405"/><use href="#pc" x="859" y="405"/><use href="#p4" x="863" y="405"/><use href="#p6" x="869" y="405"/><use href="#p7" x="875" y="405"/><use href="#p2" x="568" y="435"/><use href="#p5" x="574" y="435"/><use href="#ps" x="580" y="435"/><use href="#p0" x="586" y="435"/><use href="#p5" x="592" y="435"/><use href="#ps" x="598" y="435"/><use href="#p2" x="604" y="435"/><use href="#p0" x="610" y="435"/><use href="#p2" x="684" y="435"/><use href="#pc" x="690" y="435"/><use href="#p4" x="694" y="435"/><use href="#p7" x="700" y="435"/><use href="#p6" x="706" y="435"/><use href="#p2" x="769" y="435"/><use href="#pc" x="775" y="435"/><use href="#p4" x="779" y="435"/><use href="#p6" x="785" y="435"/><use href="#p7" x="791" y="435"/><use href="#p2" x="853" y="435"/><use href="#pc" x="859" y="435"/><use href="#p5" x="863" y="435"/><use href="#p0" x="869" y="435"/><use href="#p1" x="875" y="435"/><use href="#p2" x="568" y="464"/><use href="#p5" x="574" y="464"/><use href="#ps" x="580" y="464"/><use href="#p0" x="586" y="464"/><use href="#p5" x="592" y="464"/><use href="#ps" x="598" y="464"/><use href="#p1" x="604" y="464"/><use href="#p9" x="610" y="464"/><use href="#p2" x="684" y="464"/><use href="#pc" x="690" y="464"/><use href="#p4" x="694" y="464"/><use href="#p6" x="700" y="464"/><use href="#p3" x="706" y="464"/><use href="#p2" x="769" y="464"/><use href="#pc" x="775" y="464"/><use href="#p5" x="779" y="464"/><use href="#p0" x="785" y="464"/><use href="#p1" x="791" y="464"/><use href="#p2" x="853" y="464"/><use href="#pc" x="859" y="464"/><use href="#p4" x="863" y="464"/><use href="#p4" x="869" y="464"/><use href="#p5" x="875" y="464"/><use href="#p2" x="568" y="494"/><use href="#p5" x="574" y="494"/><use href="#ps" x="580" y="494"/><use href="#p0" x="586" y="494"/><use href="#p5" x="592" y="494"/><use href="#ps" x="598" y="494"/><use href="#p1" x="604" y="494"/><use href="#p6" x="610" y="494"/><use href="#p2" x="684" y="494"/><use href="#pc" x="690" y="494"/><use href="#p4" x="694" y="494"/><use href="#p4" x="700" y="494"/><use href="#p9" x="706" y="494"/><use href="#p2" x="769" y="494"/><use href="#pc" x="775" y="494"/><use href="#p4" x="779" y="494"/><use href="#p4" x="785" y="494"/><use href="#p5" x="791" y="494"/><use href="#p2" x="853" y="494"/><use href="#pc" x="859" y="494"/><use href="#p4" x="863" y="494"/><use href="#p9" x="869" y="494"/><use href="#p6" x="875" y="494"/><use href="#p2" x="568" y="523"/><use href="#p5" x="574" y="523"/><use href="#ps" x="580" y="523"/><use href="#p0" x="586" y="523"/><use href="#p5" x="592" y="523"/><use href="#ps" x="598" y="523"/><use href="#p1" x="604" y="523"/><use href="#p5" x="610" y="523"/><use href="#p2" x="684" y="523"/><use href="#pc" x="690" y="523"/><use href="#p4" x="694" y="523"/><use href="#p9" x="700" y="523"/><use href="#p7" x="706" y="523"/><use href="#p2" x="769" y="523"/><use href="#pc" x="775" y="523"/><use href="#p4" x="779" y="523"/><use href="#p9" x="785" y="523"/><use href="#p6" x="791" y="523"/><use href="#p2" x="853" y="523"/><use href="#pc" x="859" y="523"/><use href="#p4" x="863" y="523"/><use href="#p8" x="869" y="523"/><use href="#p2" x="875" y="523"/><use href="#p2" x="568" y="553"/><use href="#p5" x="574" y="553"/><use href="#ps" x="580" y="553"/><use href="#p0" x="586" y="553"/><use href="#p5" x="592" y="553"/><use href="#ps" x="598" y="553"/><use href="#p1" x="604" y="553"/><use href="#p4" x="610" y="553"/><use href="#p2" x="684" y="553"/><use href="#pc" x="690" y="553"/><use href="#p4" x="694" y="553"/><use href="#p9" x="700" y="553"/><use href="#p6" x="706" y="553"/><use href="#p2" x="769" y="553"/><use href="#pc" x="775" y="553"/><use href="#p4" x="779" y="553"/><use href="#p8" x="785" y="553"/><use href="#p2" x="791" y="553"/><use href="#p2" x="853" y="553"/><use href="#pc" x="859" y="553"/><use href="#p4" x="863" y="553"/><use href="#p9" x="869" y="553"/><use href="#p6" x="875" y="553"/><use href="#p2" x="568" y="582"/><use href="#p5" x="574" y="582"/><use href="#ps" x="580" y="582"/><use href="#p0" x="586" y="582"/><use href="#p5" x="592" y="582"/><use href="#ps" x="598" y="582"/><use href="#p1" x="604" y="582"/><use href="#p3" x="610" y="582"/><use href="#p2" x="684" y="582"/><use href="#pc" x="690" y="582"/><use href="#p4" x="694" y="582"/><use href="#p8" x="700" y="582"/><use href="#p6" x="706" y="582"/><use href="#p2" x="769" y="582"/><use href="#pc" x="775" y="582"/><use href="#p4" x="779" y="582"/><use href="#p9" x="785" y="582"/><use href="#p6" x="791" y="582"/><use href="#p2" x="853" y="582"/><use href="#pc" x="859" y="582"/><use href="#p4" x="863" y="582"/><use href="#p5" x="869" y="582"/><use href="#p1" x="875" y="582"/><use href="#p2" x="568" y="612"/><use href="#p5" x="574" y="612"/><use href="#ps" x="580" y="612"/><use href="#p0" x="586" y="612"/><use href="#p5" x="592" y="612"/><use href="#ps" x="598" y="612"/><use href="#p1" x="604" y="612"/><use href="#p2" x="610" y="612"/><use href="#p2" x="684" y="612"/><use href="#pc" x="690" y="612"/><use href="#p4" x="694" y="612"/><use href="#p5" x="700" y="612"/><use href="#p5" x="706" y="612"/><use href="#p2" x="769" y="612"/><use href="#pc" x="775" y="612"/><use href="#p4" x="779" y="612"/><use href="#p5" x="785" y="612"/><use href="#p1" x="791" y="612"/><use href="#p2" x="853" y="612"/><use href="#pc" x="859" y="612"/><use href="#p4" x="863" y="612"/><use href="#p4" x="869" y="612"/><use href="#p8" x="875" y="612"/><use href="#p2" x="568" y="641"/><use href="#p5" x="574" y="641"/><use href="#ps" x="580" y="641"/><use href="#p0" x="586" y="641"/><use href="#p5" x="592" y="641"/><use href="#ps" x="598" y="641"/><use href="#p0" x="604" y="641"/><use href="#p9" x="610" y="641"/><use href="#p2" x="684" y="641"/><use href="#pc" x="690" y="641"/><use href="#p4" x="694" y="641"/><use href="#p4" x="700" y="641"/><use href="#p3" x="706" y="641"/><use href="#p2" x="769" y="641"/><use href="#pc" x="775" y="641"/><use href="#p4" x="779" y="641"/><use href="#p4" x="785" y="641"/><use href="#p8" x="791" y="641"/><use href="#p2" x="853" y="641"/><use href="#pc" x="859" y="641"/><use href="#p3" x="863" y="641"/><use href="#p9" x="869" y="641"/><use href="#p5" x="875" y="641"/><use href="#p2" x="568" y="671"/><use href="#p5" x="574" y="671"/><use href="#ps" x="580" y="671"/><use href="#p0" x="586" y="671"/><use href="#p5" x="592" y="671"/><use href="#ps" x="598" y="671"/><use href="#p0" x="604" y="671"/><use href="#p8" x="610" y="671"/><use href="#p2" x="684" y="671"/><use href="#pc" x="690" y="671"/><use href="#p3" x="694" y="671"/><use href="#p7" x="700" y="671"/><use href="#p0" x="706" y="671"/><use href="#p2" x="769" y="671"/><use href="#pc" x="775" y="671"/><use href="#p3" x="779" y="671"/><use href="#p9" x="785" y="671"/><use href="#p5" x="791" y="671"/><use href="#p2" x="853" y="671"/><use href="#pc" x="859" y="671"/><use href="#p3" x="863" y="671"/><use href="#p7" x="869" y="671"/><use href="#p9" x="875" y="671"/><use href="#p0" x="39" y="680"/><use href="#p3" x="45" y="680"/><use href="#p0" x="71" y="680"/><use href="#p3" x="77" y="680"/><use href="#ps" x="83" y="680"/><use href="#p1" x="89" y="680"/><use href="#p0" x="95" y="680"/><use href="#p0" x="120" y="680"/><use href="#p3" x="126" y="680"/><use href="#ps" x="132" y="680"/><use href="#p1" x="138" y="680"/><use href="#p8" x="144" y="680"/><use href="#p0" x="202" y="680"/><use href="#p4" x="208" y="680"/><use href="#p0" x="234" y="680"/><use href="#p4" x="240" y="680"/><use href="#ps" x="246" y="680"/><use href="#p0" x="252" y="680"/><use href="#p7" x="258" y="680"/><use href="#p0" x="283" y="680"/><use href="#p4" x="289" y="680"/><use href="#ps" x="295" y="680"/><use href="#p1" x="301" y="680"/><use href="#p5" x="307" y="680"/><use href="#p0" x="332" y="680"/><use href="#p4" x="338" y="680"/><use href="#ps" x="344" y="680"/><use href="#p2" x="350" y="680"/><use href="#p3" x="356" y="680"/><use href="#p0" x="381" y="680"/><use href="#p5" x="387" y="680"/><use href="#p0" x="413" y="680"/><use href="#p5" x="419" y="680"/><use href="#ps" x="425" y="680"/><use href="#p1" x="431" y="680"/><use href="#p2" x="437" y="680"/><use href="#p0" x="489" y="680"/><use href="#p5" x="495" y="680"/><use href="#ps" x="501" y="680"/><use href="#p2" x="507" y="680"/><use href="#p3" x="513" y="680"/><use href="#p3" x="505" y="372"/><use href="#pc" x="511" y="372"/><use href="#p2" x="515" y="372"/><use href="#p0" x="521" y="372"/><use href="#p0" x="527" y="372"/><use href="#p3" x="505" y="400"/><use href="#pc" x="511" y="400"/><use href="#p1" x="515" y="400"/><use href="#p0" x="521" y="400"/><use href="#p0" x="527" y="400"/><use href="#p3" x="505" y="429"/><use href="#pc" x="511" y="429"/><use href="#p0" x="515" y="429"/><use href="#p0" x="521" y="429"/><use href="#p0" x="527" y="429"/><use href="#p2" x="505" y="457"/><use href="#pc" x="511" y="457"/><use href="#p9" x="515" y="457"/><use href="#p0" x="521" y="457"/><use href="#p0" x="527" y="457"/><use href="#p2" x="505" y="486"/><use href="#pc" x="511" y="486"/><use href="#p8" x="515" y="486"/><use href="#p0" x="521" y="486"/><use href="#p0" x="527" y="486"/><use href="#p2" x="505" y="515"/><use href="#pc" x="511" y="515"/><use href="#p7" x="515" y="515"/><use href="#p0" x="521" y="515"/><use href="#p0" x="527" y="515"/><use href="#p2" x="505" y="543"/><use href="#pc" x="511" y="543"/><use href="#p6" x="515" y="543"/><use href="#p0" x="521" y="543"/><use href="#p0" x="527" y="543"/><use href="#p2" x="505" y="572"/><use href="#pc" x="511" y="572"/><use href="#p5" x="515" y="572"/><use href="#p0" x="521" y="572"/><use href="#p0" x="527" y="572"/><use href="#p2" x="505" y="601"/><use href="#pc" x="511" y="601"/><use href="#p4" x="515" y="601"/><use href="#p0" x="521" y="601"/><use href="#p0" x="527" y="601"/><use href="#p2" x="505" y="629"/><use href="#pc" x="511" y="629"/><use href="#p3" x="515" y="629"/><use href="#p0" x="521" y="629"/><use href="#p0" x="527" y="629"/><use href="#p2" x="505" y="658"/><use href="#pc" x="511" y="658"/><use href="#p2" x="515" y="658"/><use href="#p0" x="521" y="658"/><use href="#p0" x="527" y="658"/></g><g fill="#0000cc"><use href="#pm" x="935" y="376"/><use href="#p0" x="941" y="376"/><use href="#pc" x="947" y="376"/><use href="#p0" x="951" y="376"/><use href="#p0" x="957" y="376"/><use href="#p5" x="963" y="376"/><use href="#pm" x="935" y="435"/><use href="#p0" x="941" y="435"/><use href="#pc" x="947" y="435"/><use href="#p0" x="951" y="435"/><use href="#p3" x="957" y="435"/><use href="#p4" x="963" y="435"/><use href="#pm" x="935" y="494"/><use href="#p0" x="941" y="494"/><use href="#pc" x="947" y="494"/><use href="#p0" x="951" y="494"/><use href="#p5" x="957" y="494"/><use href="#p1" x="963" y="494"/><use href="#pm" x="935" y="553"/><use href="#p0" x="941" y="553"/><use href="#pc" x="947" y="553"/><use href="#p0" x="951" y="553"/><use href="#p1" x="957" y="553"/><use href="#p4" x="963" y="553"/></g><g fill="#dd0000"><use href="#p0" x="941" y="405"/><use href="#pc" x="947" y="405"/><use href="#p0" x="951" y="405"/><use href="#p3" x="957" y="405"/><use href="#p1" x="963" y="405"/><use href="#p0" x="941" y="464"/><use href="#pc" x="947" y="464"/><use href="#p0" x="951" y="464"/><use href="#p5" x="957" y="464"/><use href="#p6" x="963" y="464"/><use href="#p0" x="941" y="523"/><use href="#pc" x="947" y="523"/><use href="#p0" x="951" y="523"/><use href="#p1" x="957" y="523"/><use href="#p4" x="963" y="523"/><use href="#p0" x="941" y="582"/><use href="#pc" x="947" y="582"/><use href="#p0" x="951" y="582"/><use href="#p4" x="957" y="582"/><use href="#p5" x="963" y="582"/><use href="#p0" x="941" y="612"/><use href="#pc" x="947" y="612"/><use href="#p0" x="951" y="612"/><use href="#p0" x="957" y="612"/><use href="#p3" x="963" y="612"/><use href="#p0" x="941" y="641"/><use href="#pc" x="947" y="641"/><use href="#p0" x="951" y="641"/><use href="#p5" x="957" y="641"/><use href="#p3" x="963" y="641"/><use href="#p0" x="941" y="671"/><use href="#pc" x="947" y="671"/><use href="#p0" x="951" y="671"/><use href="#p1" x="957" y="671"/><use href="#p6" x="963" y="671"/></g><g fill="#0000ff"><use href="#kad6d" x="7" y="343"/><use href="#kace0" x="19" y="343"/><use href="#p1" x="31" y="343"/><use href="#k59" x="37" y="343"/><use href="#kad6d" x="49" y="343"/><use href="#kace0" x="61" y="343"/><use href="#p2" x="73" y="343"/><use href="#k59" x="79" y="343"/></g><g fill="#e00000"><use href="#kad6d" x="91" y="343"/><use href="#kace0" x="103" y="343"/><use href="#p3" x="115" y="343"/><use href="#k59" x="121" y="343"/></g><g fill="#8080ff"><use href="#kd55c" x="133" y="343"/><use href="#kc804" x="145" y="343"/><use href="#p3" x="157" y="343"/><use href="#k59" x="163" y="343"/></g><g fill="#66cc00"><use href="#kd68c" x="174" y="343"/><use href="#kc0ac" x="186" y="343"/><use href="#k41" x="198" y="343"/><use href="#k41" x="206" y="343"/><use href="#pm" x="214" y="343"/></g></svg>
</body></html>
